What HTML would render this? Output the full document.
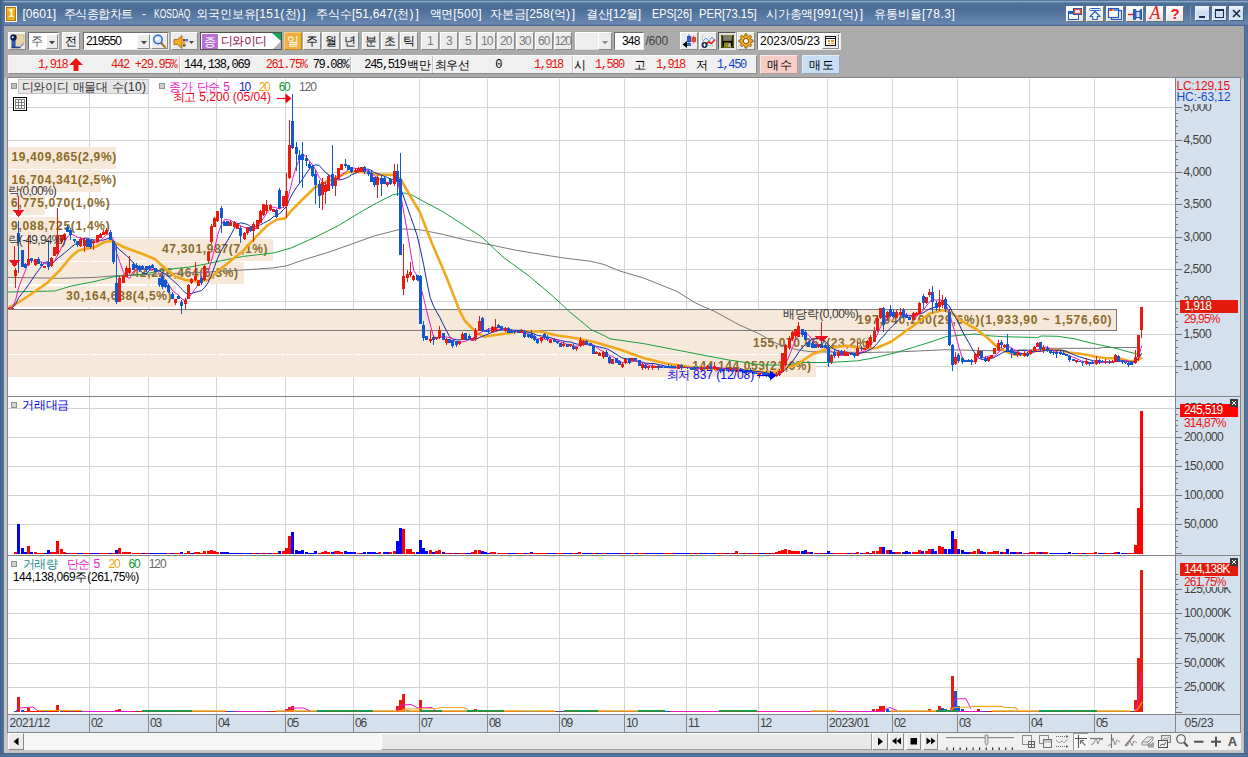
<!DOCTYPE html><html lang="ko"><head><meta charset="utf-8"><title>주식종합차트</title><style>
html,body{margin:0;padding:0}
body{width:1248px;height:757px;position:relative;overflow:hidden;background:#4D6E97;font-family:"Liberation Sans",sans-serif;font-size:12px;line-height:12px;color:#000}
div,span{position:absolute;box-sizing:border-box;white-space:nowrap}
.t{height:12px;line-height:12px;font-size:12px}
.b{font-weight:bold}
.btn{background:#ECECEC;border:1px solid;border-color:#fff #8a8a8a #8a8a8a #fff}
.inp{background:#fff;border:1px solid;border-color:#6e6e6e #e8e8e8 #e8e8e8 #6e6e6e}
.tb{background:linear-gradient(#ffffff,#e4e4e4);border:1px solid;border-color:#f8f8f8 #707070 #707070 #f8f8f8;border-radius:1px}
.wb{background:linear-gradient(#eef4fb 0%,#c9dbee 45%,#dce9f6 100%);border:1px solid;border-color:#e8f0f8 #4a6488 #4a6488 #e8f0f8}
.k{position:static;display:inline-block;text-align:center}.r{position:static;display:inline}</style></head><body>
<div class="" style="left:0px;top:0px;width:1248px;height:26px;background:linear-gradient(#3f5f87 0px,#8aa7c7 1.5px,#4f7097 3px,#4b6c94 8px,#5c7da6 18px,#6888b0 24px,#40618a 26px)"></div>
<div class="" style="left:0px;top:0px;width:4px;height:757px;background:linear-gradient(90deg,#3b5b82 0,#4a6a93 1.5px,#54749c 4px)"></div>
<div class="" style="left:1244px;top:26px;width:4px;height:731px;background:linear-gradient(90deg,#3b5b82 0,#5878a0 1.5px,#4d6e97 4px)"></div>
<div class="" style="left:0px;top:753px;width:1248px;height:4px;background:linear-gradient(#3f5f87 0,#54749c 2px,#4d6e97 4px)"></div>
<div class="" style="left:4px;top:26px;width:1240px;height:727px;background:#ABABAB"></div>
<div class="" style="left:4px;top:750px;width:1240px;height:3px;background:#C6C6C6"></div>
<div class="" style="left:1241px;top:78px;width:3px;height:675px;background:#C6C6C6"></div>
<div class="" style="left:4px;top:78px;width:4px;height:675px;background:#C6C6C6"></div>
<div class="" style="left:5px;top:6px;width:12px;height:16px;background:#fff8e0;border:1px solid #fffbe8"></div>
<div class="" style="left:6px;top:7px;width:10px;height:14px;background:linear-gradient(#f7c04a,#f0a010 60%,#f4b030);border:1px solid #b87808"></div>
<span class="t" style="left:8.5px;top:9.12px;color:#fff;font-size:10px;line-height:10px;height:10px;font-weight:bold;letter-spacing:-1.12px;">1</span>
<span class="t" style="left:22.5px;top:7.64px;color:#fff;letter-spacing:0.02px;">[0601]</span>
<span class="t" style="left:63.7px;top:7.64px;color:#fff;"><span class="k" style="width:11.47px">주</span><span class="k" style="width:11.47px">식</span><span class="k" style="width:11.47px">종</span><span class="k" style="width:11.47px">합</span><span class="k" style="width:11.47px">차</span><span class="k" style="width:11.47px">트</span></span>
<span class="t" style="left:142px;top:7.64px;color:#fff;letter-spacing:3.00px;">-</span>
<span class="t" style="left:153.7px;top:7.64px;color:#fff;transform:scaleX(0.707);transform-origin:0 0;">KOSDAQ</span>
<span class="t" style="left:195.5px;top:7.64px;color:#fff;"><span class="k" style="width:12.00px">외</span><span class="k" style="width:12.00px">국</span><span class="k" style="width:12.00px">인</span><span class="k" style="width:12.00px">보</span><span class="k" style="width:12.00px">유</span><span class="r" style="letter-spacing:0.33px">[151(</span><span class="k" style="width:12.00px">천</span><span class="r" style="letter-spacing:1.83px">)]</span></span>
<span class="t" style="left:315.7px;top:7.64px;color:#fff;"><span class="k" style="width:12.12px">주</span><span class="k" style="width:12.12px">식</span><span class="k" style="width:12.12px">수</span><span class="r" style="letter-spacing:0.17px">[51,647(</span><span class="k" style="width:12.12px">천</span><span class="r" style="letter-spacing:1.88px">)]</span></span>
<span class="t" style="left:429.5px;top:7.64px;color:#fff;"><span class="k" style="width:11.89px">액</span><span class="k" style="width:11.89px">면</span><span class="r" style="letter-spacing:0.40px">[500]</span></span>
<span class="t" style="left:490px;top:7.64px;color:#fff;"><span class="k" style="width:11.86px">자</span><span class="k" style="width:11.86px">본</span><span class="k" style="width:11.86px">금</span><span class="r" style="letter-spacing:0.26px">[258(</span><span class="k" style="width:11.86px">억</span><span class="r" style="letter-spacing:1.77px">)]</span></span>
<span class="t" style="left:586.2px;top:7.64px;color:#fff;"><span class="k" style="width:11.55px">결</span><span class="k" style="width:11.55px">산</span><span class="r" style="letter-spacing:0.05px">[12</span><span class="k" style="width:11.55px">월</span><span class="r" style="letter-spacing:1.95px">]</span></span>
<span class="t" style="left:651.5px;top:7.64px;color:#fff;transform:scaleX(0.908);transform-origin:0 0;">EPS[26]</span>
<span class="t" style="left:699px;top:7.64px;color:#fff;transform:scaleX(0.937);transform-origin:0 0;">PER[73.15]</span>
<span class="t" style="left:765.7px;top:7.64px;color:#fff;"><span class="k" style="width:11.92px">시</span><span class="k" style="width:11.92px">가</span><span class="k" style="width:11.92px">총</span><span class="k" style="width:11.92px">액</span><span class="r" style="letter-spacing:0.29px">[991(</span><span class="k" style="width:11.92px">억</span><span class="r" style="letter-spacing:1.79px">)]</span></span>
<span class="t" style="left:873.5px;top:7.64px;color:#fff;"><span class="k" style="width:12.15px">유</span><span class="k" style="width:12.15px">통</span><span class="k" style="width:12.15px">비</span><span class="k" style="width:12.15px">율</span><span class="r" style="letter-spacing:0.56px">[78.3]</span></span>
<div class="tb" style="left:1066px;top:6px;width:18px;height:16px;"></div>
<div class="tb" style="left:1086px;top:6px;width:18px;height:16px;"></div>
<div class="tb" style="left:1106px;top:6px;width:18px;height:16px;"></div>
<div class="tb" style="left:1126px;top:6px;width:18px;height:16px;"></div>
<div class="tb" style="left:1146px;top:6px;width:18px;height:16px;"></div>
<div class="tb" style="left:1166px;top:6px;width:18px;height:16px;"></div>
<div class="" style="left:1190px;top:6px;width:1px;height:15px;background:#8096b0"></div>
<div class="wb" style="left:1195px;top:6px;width:15px;height:15px;"></div>
<div class="wb" style="left:1212px;top:6px;width:15px;height:15px;"></div>
<div class="wb" style="left:1229px;top:6px;width:15px;height:15px;"></div>
<div class="btn" style="left:8px;top:32px;width:18px;height:18px;"></div>
<div class="inp" style="left:28px;top:32px;width:31px;height:18px;"></div>
<div class="btn" style="left:46px;top:34px;width:12px;height:15px;"></div>
<div class="btn" style="left:62px;top:32px;width:18px;height:18px;"></div>
<div class="inp" style="left:83px;top:32px;width:86px;height:18px;"></div>
<div class="btn" style="left:137px;top:34px;width:13px;height:15px;"></div>
<div class="btn" style="left:151px;top:33px;width:17px;height:16px;"></div>
<div class="btn" style="left:171px;top:32px;width:27px;height:18px;"></div>
<div class="" style="left:200px;top:32px;width:82px;height:18px;border:1px solid #505050;background:#fff"></div>
<div class="" style="left:202px;top:34px;width:16px;height:15px;background:#B870D4"></div>
<div class="" style="left:284px;top:32px;width:18px;height:18px;background:#F0B040;border:1px solid;border-color:#f8d080 #c08820 #c08820 #f8d080"></div>
<div class="btn" style="left:303px;top:32px;width:18px;height:18px;"></div>
<div class="btn" style="left:322px;top:32px;width:18px;height:18px;"></div>
<div class="btn" style="left:341px;top:32px;width:18px;height:18px;"></div>
<div class="btn" style="left:362px;top:32px;width:18px;height:18px;"></div>
<div class="btn" style="left:381px;top:32px;width:18px;height:18px;"></div>
<div class="btn" style="left:400px;top:32px;width:18px;height:18px;"></div>
<div class="btn" style="left:421px;top:32px;width:18px;height:18px;"></div>
<div class="btn" style="left:440px;top:32px;width:18px;height:18px;"></div>
<div class="btn" style="left:459px;top:32px;width:18px;height:18px;"></div>
<div class="btn" style="left:478px;top:32px;width:18px;height:18px;"></div>
<div class="btn" style="left:497px;top:32px;width:18px;height:18px;"></div>
<div class="btn" style="left:516px;top:32px;width:18px;height:18px;"></div>
<div class="btn" style="left:535px;top:32px;width:18px;height:18px;"></div>
<div class="btn" style="left:554px;top:32px;width:18px;height:18px;"></div>
<div class="" style="left:575px;top:32px;width:24px;height:18px;background:#EEEEEE;border:1px solid;border-color:#fff #ddd #ddd #fff"></div>
<div class="btn" style="left:598px;top:32px;width:14px;height:18px;"></div>
<div class="inp" style="left:614px;top:32px;width:30px;height:18px;"></div>
<div class="btn" style="left:680px;top:32px;width:18px;height:18px;"></div>
<div class="btn" style="left:699px;top:32px;width:18px;height:18px;"></div>
<div class="btn" style="left:718px;top:32px;width:18px;height:18px;border-color:#555 #eee #eee #555;background:#E0E0E0"></div>
<div class="btn" style="left:737px;top:32px;width:18px;height:18px;"></div>
<div class="" style="left:757px;top:32px;width:84px;height:18px;border:1px solid;border-color:#6e6e6e #f0f0f0 #f0f0f0 #6e6e6e;background:#fff"></div>
<div class="btn" style="left:822px;top:34px;width:17px;height:15px;"></div>
<div class="" style="left:8px;top:55px;width:749px;height:19px;background:#F0F0F0;border:1px solid;border-color:#fafafa #8c8c8c #8c8c8c #fafafa"></div>
<div class="" style="left:179px;top:56px;width:2px;height:17px;background:#c4c4c4;border-right:1px solid #fff"></div>
<div class="" style="left:350px;top:56px;width:2px;height:17px;background:#c4c4c4;border-right:1px solid #fff"></div>
<div class="" style="left:432px;top:56px;width:2px;height:17px;background:#c4c4c4;border-right:1px solid #fff"></div>
<div class="" style="left:572px;top:56px;width:2px;height:17px;background:#c4c4c4;border-right:1px solid #fff"></div>
<div class="" style="left:760px;top:55px;width:38px;height:19px;background:#F6CEC8;border:1px solid;border-color:#fbe4e0 #b89c98 #b89c98 #fbe4e0"></div>
<div class="" style="left:802px;top:55px;width:38px;height:19px;background:#C6DEF6;border:1px solid;border-color:#e0eefa #98a8b8 #98a8b8 #e0eefa"></div>
<span class="t" style="left:31px;top:35.14px;color:#585858;"><span class="k" style="width:11.00px">주</span></span>
<span class="t" style="left:65px;top:35.14px;color:#000;"><span class="k" style="width:12.00px">전</span></span>
<span class="t" style="left:86px;top:35.14px;color:#000;letter-spacing:-0.83px;">219550</span>
<span class="t" style="left:204px;top:35.64px;color:#fff;"><span class="k" style="width:12.00px">종</span></span>
<span class="t" style="left:220.5px;top:35.14px;color:#8A0048;"><span class="k" style="width:11.62px">디</span><span class="k" style="width:11.62px">와</span><span class="k" style="width:11.62px">이</span><span class="k" style="width:11.62px">디</span></span>
<span class="t" style="left:287px;top:35.14px;color:#fff;"><span class="k" style="width:12.00px">일</span></span>
<span class="t" style="left:306px;top:35.14px;color:#000;"><span class="k" style="width:12.00px">주</span></span>
<span class="t" style="left:325px;top:35.14px;color:#000;"><span class="k" style="width:12.00px">월</span></span>
<span class="t" style="left:344px;top:35.14px;color:#000;"><span class="k" style="width:12.00px">년</span></span>
<span class="t" style="left:365px;top:35.14px;color:#000;"><span class="k" style="width:12.00px">분</span></span>
<span class="t" style="left:384px;top:35.14px;color:#000;"><span class="k" style="width:12.00px">초</span></span>
<span class="t" style="left:403px;top:35.14px;color:#000;"><span class="k" style="width:12.00px">틱</span></span>
<span class="t" style="left:427px;top:35.14px;color:#7a7a7a;letter-spacing:-1.38px;">1</span>
<span class="t" style="left:446px;top:35.14px;color:#7a7a7a;letter-spacing:-1.38px;">3</span>
<span class="t" style="left:465px;top:35.14px;color:#7a7a7a;letter-spacing:-1.38px;">5</span>
<span class="t" style="left:481px;top:35.14px;color:#7a7a7a;letter-spacing:-0.91px;">10</span>
<span class="t" style="left:500px;top:35.14px;color:#7a7a7a;letter-spacing:-0.91px;">20</span>
<span class="t" style="left:519px;top:35.14px;color:#7a7a7a;letter-spacing:-0.91px;">30</span>
<span class="t" style="left:538px;top:35.14px;color:#7a7a7a;letter-spacing:-0.91px;">60</span>
<span class="t" style="left:554.75px;top:35.14px;color:#7a7a7a;letter-spacing:-1.41px;">120</span>
<span class="t" style="left:622px;top:35.14px;color:#000;letter-spacing:-0.81px;">348</span>
<span class="t" style="left:645.5px;top:35.14px;color:#404040;letter-spacing:-0.25px;">/600</span>
<span class="t" style="left:760px;top:35.14px;color:#000;letter-spacing:-0.01px;">2023/05/23</span>
<span class="t" style="left:38px;top:58.64px;color:#E8140C;font-family:'Liberation Mono',monospace;letter-spacing:-1.34px;">1,918</span>
<span class="t" style="left:111px;top:58.64px;color:#E8140C;font-family:'Liberation Mono',monospace;letter-spacing:-1.26px;">442 +29.95%</span>
<span class="t" style="left:184px;top:58.64px;color:#000;font-family:'Liberation Mono',monospace;letter-spacing:-1.26px;">144,138,069</span>
<span class="t" style="left:265.7px;top:58.64px;color:#E8140C;font-family:'Liberation Mono',monospace;letter-spacing:-1.36px;">261.75%</span>
<span class="t" style="left:312.7px;top:58.64px;color:#000;font-family:'Liberation Mono',monospace;letter-spacing:-1.31px;">79.08%</span>
<span class="t" style="left:364.3px;top:58.64px;color:#000;font-family:'Liberation Mono',monospace;letter-spacing:-1.34px;">245,519</span>
<span class="t" style="left:406.5px;top:58.64px;color:#000;"><span class="k" style="width:12.00px">백</span><span class="k" style="width:12.00px">만</span></span>
<span class="t" style="left:435px;top:58.64px;color:#000;"><span class="k" style="width:11.33px">최</span><span class="k" style="width:11.33px">우</span><span class="k" style="width:11.33px">선</span></span>
<span class="t" style="left:495.3px;top:58.64px;color:#000;font-family:'Liberation Mono',monospace;letter-spacing:-2.41px;">0</span>
<span class="t" style="left:534px;top:58.64px;color:#E8140C;font-family:'Liberation Mono',monospace;letter-spacing:-1.45px;">1,918</span>
<span class="t" style="left:574px;top:58.64px;color:#000;"><span class="k" style="width:10.00px">시</span></span>
<span class="t" style="left:595px;top:58.64px;color:#E8140C;font-family:'Liberation Mono',monospace;letter-spacing:-1.43px;">1,580</span>
<span class="t" style="left:634px;top:58.64px;color:#000;"><span class="k" style="width:11.00px">고</span></span>
<span class="t" style="left:656px;top:58.64px;color:#E8140C;font-family:'Liberation Mono',monospace;letter-spacing:-1.45px;">1,918</span>
<span class="t" style="left:696px;top:58.64px;color:#000;"><span class="k" style="width:11.00px">저</span></span>
<span class="t" style="left:716.7px;top:58.64px;color:#1040C8;font-family:'Liberation Mono',monospace;letter-spacing:-1.38px;">1,450</span>
<span class="t" style="left:767px;top:58.64px;color:#000;"><span class="k" style="width:12.50px">매</span><span class="k" style="width:12.50px">수</span></span>
<span class="t" style="left:809px;top:58.64px;color:#000;"><span class="k" style="width:12.50px">매</span><span class="k" style="width:12.50px">도</span></span>
<svg style="position:absolute;left:69px;top:58px" width="14" height="13" viewBox="0 0 14 13"><path d="M7 0l7 7h-4.5v6h-5v-6h-4.5z" fill="#F0140C"/></svg>
<svg width="1248" height="757" viewBox="0 0 1248 757" style="position:absolute;left:0;top:0" shape-rendering="crispEdges">
<rect x="8" y="78" width="1167" height="636" fill="#fff"/>
<rect x="1175" y="78" width="66" height="655" fill="#D5E0EE"/>
<rect x="8" y="714" width="1167" height="19" fill="#D5E0EE"/>
<path d="M89 78v636M148 78v636M216 78v636M285 78v636M353 78v636M419 78v636M487 78v636M559 78v636M624 78v636M686 78v636M758 78v636M827 78v636M892 78v636M957 78v636M1029 78v636M1094 78v636M7 107h1167M7 140h1167M7 172h1167M7 204h1167M7 237h1167M7 269h1167M7 301h1167M7 334h1167M7 366h1167M7 408h1167M7 437h1167M7 466h1167M7 495h1167M7 524h1167M7 589h1167M7 613h1167M7 638h1167M7 663h1167M7 687h1167" stroke="#D4D4D4" stroke-width="1" fill="none" transform="translate(0.5,0.5)"/>
<rect x="8" y="147" width="108" height="22" fill="#F6E9D9"/>
<rect x="8" y="170" width="93" height="22" fill="#F6E9D9"/>
<rect x="8" y="194" width="37" height="21" fill="#F6E9D9"/>
<rect x="8" y="217" width="52" height="21" fill="#F6E9D9"/>
<rect x="8" y="239" width="265" height="22" fill="#F6E9D9"/>
<rect x="8" y="262" width="236" height="22" fill="#F6E9D9"/>
<rect x="8" y="286" width="168" height="21" fill="#F6E9D9"/>
<rect x="8" y="310" width="1108" height="20" fill="#F6E9D9"/>
<rect x="8" y="331" width="864" height="23" fill="#F6E9D9"/>
<rect x="8" y="355" width="808" height="22" fill="#F6E9D9"/>
<path d="M8 309.5H1116.5V330.5H8" stroke="#7C7C7C" stroke-width="1" fill="none"/>
</svg>

<div class="" style="left:18px;top:79px;width:131px;height:15px;background:#E6E6E6;border:1px solid #c2c2c2"></div>
<div class="" style="left:11px;top:83px;width:6px;height:6px;background:#bdbdbd;border:1px solid #909090"></div>
<div class="" style="left:159px;top:83px;width:6px;height:6px;background:#d0d0d0;border:1px solid #909090"></div>
<div class="" style="left:11px;top:402px;width:6px;height:6px;background:#d0d0d0;border:1px solid #909090"></div>
<div class="" style="left:11px;top:561px;width:6px;height:6px;background:#d0d0d0;border:1px solid #909090"></div>
<span class="t" style="left:21.5px;top:80.64px;color:#303030;"><span class="k" style="width:11.81px">디</span><span class="k" style="width:11.81px">와</span><span class="k" style="width:11.81px">이</span><span class="k" style="width:11.81px">디</span><span class="r" style="letter-spacing:0.59px"> </span><span class="k" style="width:11.81px">매</span><span class="k" style="width:11.81px">물</span><span class="k" style="width:11.81px">대</span><span class="r" style="letter-spacing:0.59px"> </span><span class="k" style="width:11.81px">수</span><span class="r" style="letter-spacing:0.32px">(10)</span></span>
<span class="t" style="left:169px;top:80.64px;color:#E818C8;"><span class="k" style="width:11.81px">종</span><span class="k" style="width:11.81px">가</span><span class="r" style="letter-spacing:0.59px"> </span><span class="k" style="width:11.81px">단</span><span class="k" style="width:11.81px">순</span><span class="r" style="letter-spacing:-0.09px"> 5</span></span>
<span class="t" style="left:239px;top:80.64px;color:#1428C0;letter-spacing:-1.24px;">10</span>
<span class="t" style="left:258.7px;top:80.64px;color:#F0A000;letter-spacing:-1.24px;">20</span>
<span class="t" style="left:278.7px;top:80.64px;color:#109838;letter-spacing:-1.24px;">60</span>
<span class="t" style="left:299px;top:80.64px;color:#686868;letter-spacing:-1.01px;">120</span>
<span class="t" style="left:172.5px;top:91.14px;color:#F00018;"><span class="k" style="width:11.70px">최</span><span class="k" style="width:11.70px">고</span><span class="r" style="letter-spacing:0.03px"> 5,200 (05/04)</span></span>
<span class="t" style="left:11.5px;top:151.14px;color:#8C6A28;font-weight:bold;letter-spacing:0.62px;">19,409,865(2,9%)</span>
<span class="t" style="left:11.5px;top:174.44px;color:#8C6A28;font-weight:bold;letter-spacing:0.62px;">16,704,341(2,5%)</span>
<span class="t" style="left:11px;top:197.44px;color:#8C6A28;font-weight:bold;letter-spacing:0.71px;">6,775,070(1,0%)</span>
<span class="t" style="left:11px;top:220.44px;color:#8C6A28;font-weight:bold;letter-spacing:0.71px;">9,088,725(1,4%)</span>
<span class="t" style="left:162px;top:243.44px;color:#8C6A28;font-weight:bold;letter-spacing:0.68px;">47,301,987(7,1%)</span>
<span class="t" style="left:132.5px;top:266.84px;color:#8C6A28;font-weight:bold;letter-spacing:0.68px;">42,226,464(6,3%)</span>
<span class="t" style="left:66px;top:290.14px;color:#8C6A28;font-weight:bold;letter-spacing:0.68px;">30,164,688(4,5%)</span>
<span class="t" style="left:857px;top:313.64px;color:#8C6A28;font-weight:bold;letter-spacing:0.81px;">197,940,260(29,6%)(1,933,90 ~ 1,576,60)</span>
<span class="t" style="left:753px;top:337.14px;color:#8C6A28;font-weight:bold;letter-spacing:0.59px;">155,070,052(23,2%)</span>
<span class="t" style="left:692.3px;top:360.14px;color:#8C6A28;font-weight:bold;letter-spacing:0.59px;">144,144,053(21,6%)</span>

<svg width="1248" height="757" viewBox="0 0 1248 757" style="position:absolute;left:0;top:0">
<polyline fill="none" stroke="#787878" stroke-width="1"  points="8.0,277.4 59.4,278.3 95.0,277.4 118.8,275.5 160.0,274.0 208.0,272.0 250.0,269.5 272.0,268.0 286.0,266.0 303.0,260.0 326.7,252.8 350.5,244.5 374.0,236.0 398.0,229.8 404.0,229.0 419.8,229.7 443.5,234.5 467.3,240.4 491.0,245.0 514.8,250.0 538.6,254.0 562.4,257.8 591.0,261.3 604.0,264.5 619.8,271.0 643.5,278.0 676.8,291.3 695.8,303.2 714.8,311.5 738.6,324.6 757.6,333.0 776.6,343.6 796.0,349.5 810.0,351.7 862.7,352.5 896.0,352.0 946.0,349.7 996.0,350.8 1029.0,350.0 1051.0,348.3 1099.0,348.3 1102.7,347.5 1137.7,347.5"/>
<polyline fill="none" stroke="#18A040" stroke-width="1"  points="8.0,292.0 54.7,291.0 71.3,286.0 95.0,281.4 114.0,276.7 142.6,274.3 166.4,269.5 190.0,267.0 208.0,263.6 219.8,261.0 243.5,256.4 274.4,252.8 291.0,248.0 314.8,237.4 338.6,225.5 362.4,211.0 376.6,203.0 393.3,194.6 404.0,193.0 412.0,195.0 421.0,200.0 443.5,212.0 481.6,236.8 503.0,257.0 529.0,276.0 553.0,296.3 569.5,311.7 591.0,329.5 604.0,335.5 610.0,338.8 643.5,343.6 676.8,350.0 705.0,355.5 729.0,360.0 762.0,365.0 786.0,365.0 804.0,362.5 829.0,362.5 857.7,360.8 876.0,357.5 896.0,352.5 912.7,347.5 929.0,342.5 946.0,336.7 962.7,335.0 976.0,334.0 989.0,335.8 1004.0,336.7 1037.7,337.5 1041.0,336.0 1057.7,336.3 1074.0,338.7 1091.0,343.0 1104.0,345.8 1116.0,348.3 1129.0,352.0 1137.7,354.0 1141.0,354.5"/>
<polyline fill="none" stroke="#F2A81C" stroke-width="2.6" stroke-linejoin="round" points="8.0,308.0 14.0,305.0 23.8,299.0 35.7,291.0 47.5,282.6 59.4,270.7 71.3,256.5 78.4,250.5 95.0,247.0 104.6,242.0 111.7,241.0 123.6,247.0 142.6,254.0 154.5,258.8 166.4,269.5 176.0,276.7 185.4,280.0 197.0,281.4 208.0,280.0 219.8,269.5 231.7,260.0 243.5,250.4 255.4,237.4 267.3,225.5 276.8,219.5 285.0,218.4 291.0,211.0 303.0,199.0 314.8,187.5 326.7,181.5 338.6,176.8 348.0,172.0 362.4,172.0 376.7,174.4 393.3,175.0 400.4,179.0 404.0,185.0 412.6,200.0 419.8,212.0 431.7,242.8 446.0,276.0 460.0,311.7 465.0,321.0 476.8,333.0 484.0,336.7 500.6,334.3 519.6,331.4 538.6,331.2 557.6,335.5 576.6,338.3 596.0,342.4 619.8,349.5 643.5,357.9 667.0,363.8 691.0,367.0 714.8,368.6 738.6,369.7 762.0,371.7 776.6,372.0 786.0,367.4 796.0,365.0 812.7,354.0 829.0,348.3 846.0,345.8 862.7,348.3 876.0,348.3 891.0,341.7 904.0,332.5 916.0,324.0 929.0,314.0 942.7,310.0 951.0,312.5 962.7,321.7 976.0,329.0 987.7,338.0 996.0,346.0 1006.0,351.7 1016.0,355.0 1026.0,354.0 1036.0,350.8 1046.0,350.0 1059.0,350.0 1069.0,352.5 1082.7,354.0 1096.0,356.7 1106.0,358.3 1119.0,358.3 1127.7,360.8 1136.0,361.0 1142.0,357.5"/>
<polyline fill="none" stroke="#1428A8" stroke-width="1"  points="9.0,308.0 12.2,308.0 15.5,304.1 18.8,297.6 22.0,293.4 25.3,289.4 28.6,284.6 31.8,279.9 35.1,275.0 38.4,270.5 41.6,266.3 44.9,262.1 48.1,261.9 51.4,263.4 54.7,261.4 57.9,258.1 61.2,255.7 64.5,253.0 67.7,250.3 71.0,247.4 74.3,244.9 77.5,242.8 80.8,239.9 84.1,238.2 87.3,238.2 90.6,239.4 93.8,240.0 97.1,240.1 100.4,240.3 103.6,240.0 106.9,238.9 110.2,238.4 113.4,240.8 116.7,246.9 120.0,250.1 123.2,252.9 126.5,255.6 129.8,258.9 133.0,262.5 136.3,266.2 139.5,270.1 142.8,273.0 146.1,273.7 149.3,270.5 152.6,269.5 155.9,269.1 159.1,270.8 162.4,272.7 165.7,274.5 168.9,276.9 172.2,279.8 175.5,282.8 178.7,285.8 182.0,289.5 185.3,292.8 188.5,294.1 191.8,293.4 195.0,292.3 198.3,291.5 201.6,290.6 204.8,287.3 208.1,282.5 211.4,275.2 214.6,266.4 217.9,257.4 221.2,250.8 224.4,245.4 227.7,240.4 231.0,234.6 234.2,228.6 237.5,224.3 240.7,222.8 244.0,223.5 247.3,224.4 250.5,226.4 253.8,227.0 257.1,226.4 260.3,224.9 263.6,223.1 266.9,221.4 270.1,219.6 273.4,216.8 276.7,215.3 279.9,213.4 283.2,209.8 286.5,206.5 289.7,199.1 293.0,192.8 296.2,187.8 299.5,183.2 302.8,178.7 306.0,173.9 309.3,169.1 312.6,165.9 315.8,164.8 319.1,165.3 322.4,169.0 325.6,172.7 328.9,174.8 332.2,177.4 335.4,179.2 338.7,179.9 341.9,179.5 345.2,178.5 348.5,177.0 351.7,174.6 355.0,173.4 358.3,171.7 361.5,170.9 364.8,169.5 368.1,169.1 371.3,170.4 374.6,172.6 377.9,173.7 381.1,175.1 384.4,176.3 387.7,177.6 390.9,179.2 394.2,179.5 397.4,180.5 400.7,188.5 404.0,197.9 407.2,206.8 410.5,216.4 413.8,225.6 417.0,235.2 420.3,249.2 423.6,264.6 426.8,281.6 430.1,297.3 433.4,305.8 436.6,311.9 439.9,317.5 443.1,324.2 446.4,330.5 449.7,336.8 452.9,339.0 456.2,339.7 459.5,339.9 462.7,339.4 466.0,339.3 469.3,339.5 472.5,340.4 475.8,339.4 479.1,337.6 482.3,336.4 485.6,335.0 488.9,333.7 492.1,332.3 495.4,331.6 498.6,330.5 501.9,329.6 505.2,328.5 508.4,328.9 511.7,330.1 515.0,330.2 518.2,330.3 521.5,330.2 524.8,331.1 528.0,332.1 531.3,333.1 534.6,334.1 537.8,335.5 541.1,335.9 544.3,336.4 547.6,337.1 550.9,337.8 554.1,339.0 557.4,339.6 560.7,340.6 563.9,341.2 567.2,341.9 570.5,342.0 573.7,343.2 577.0,344.1 580.3,344.2 583.5,344.4 586.8,344.6 590.1,344.9 593.3,345.6 596.6,346.4 599.8,347.1 603.1,347.9 606.4,348.6 609.6,350.2 612.9,352.1 616.2,354.2 619.4,356.4 622.7,358.2 626.0,358.6 629.2,359.7 632.5,360.2 635.8,361.1 639.0,362.0 642.3,362.2 645.5,363.1 648.8,363.4 652.1,363.5 655.3,363.8 658.6,364.7 661.9,365.2 665.1,366.1 668.4,366.9 671.7,367.1 674.9,367.6 678.2,367.2 681.5,367.4 684.7,367.5 688.0,367.7 691.3,367.9 694.5,368.0 697.8,368.1 701.0,367.9 704.3,367.9 707.6,367.6 710.8,368.0 714.1,367.9 717.4,367.9 720.6,368.2 723.9,368.3 727.2,368.5 730.4,368.4 733.7,368.9 737.0,368.9 740.2,369.4 743.5,369.8 746.7,370.5 750.0,370.9 753.3,371.2 756.5,371.5 759.8,371.7 763.1,372.4 766.3,373.0 769.6,373.7 772.9,374.0 776.1,374.1 779.4,373.8 782.7,371.9 785.9,369.0 789.2,365.4 792.5,361.3 795.7,356.8 799.0,351.7 802.2,347.6 805.5,344.2 808.8,341.5 812.0,339.2 815.3,338.8 818.6,338.7 821.8,339.7 825.1,341.4 828.4,344.6 831.6,347.5 834.9,349.6 838.2,350.8 841.4,351.6 844.7,352.0 847.9,352.4 851.2,353.6 854.5,354.3 857.7,354.3 861.0,353.1 864.3,352.3 867.5,350.8 870.8,349.3 874.1,346.9 877.3,343.4 880.6,338.9 883.9,335.9 887.1,331.5 890.4,328.3 893.6,325.0 896.9,321.4 900.2,318.5 903.4,316.5 906.7,315.3 910.0,315.5 913.2,316.1 916.5,314.9 919.8,314.1 923.0,312.8 926.3,310.8 929.6,308.8 932.8,307.8 936.1,306.9 939.4,305.2 942.6,303.2 945.9,302.8 949.1,306.0 952.4,312.2 955.7,317.5 958.9,323.9 962.2,330.9 965.5,337.0 968.7,342.5 972.0,348.6 975.3,354.0 978.5,358.1 981.8,359.5 985.1,359.1 988.3,359.1 991.6,358.5 994.8,357.1 998.1,355.2 1001.4,353.4 1004.6,351.7 1007.9,351.4 1011.2,351.6 1014.4,351.3 1017.7,350.4 1021.0,350.3 1024.2,350.1 1027.5,350.9 1030.8,351.6 1034.0,351.7 1037.3,351.5 1040.6,351.3 1043.8,350.7 1047.1,350.3 1050.3,350.4 1053.6,350.2 1056.9,350.3 1060.1,350.1 1063.4,350.6 1066.7,351.5 1069.9,353.2 1073.2,354.4 1076.5,355.8 1079.7,356.9 1083.0,357.9 1086.3,358.7 1089.5,359.7 1092.8,360.7 1096.0,361.2 1099.3,361.9 1102.6,362.1 1105.8,362.1 1109.1,362.4 1112.4,362.2 1115.6,361.4 1118.9,361.4 1122.2,361.2 1125.4,361.1 1128.7,361.6 1132.0,361.9 1135.2,361.3 1138.5,358.7 1141.8,353.1"/>
<polyline fill="none" stroke="#E818C8" stroke-width="1"  points="9.0,308.0 12.2,308.0 15.5,300.3 18.8,287.1 22.0,278.9 25.3,270.9 28.6,261.1 31.8,259.4 35.1,262.8 38.4,262.2 41.6,261.8 44.9,263.2 48.1,264.3 51.4,264.0 54.7,260.7 57.9,254.5 61.2,248.3 64.5,241.7 67.7,236.5 71.0,234.1 74.3,235.3 77.5,237.2 80.8,238.1 84.1,239.8 87.3,242.2 90.6,243.4 93.8,242.7 97.1,242.0 100.4,240.8 103.6,237.7 106.9,234.3 110.2,234.1 113.4,239.6 116.7,253.1 120.0,262.4 123.2,271.5 126.5,277.1 129.8,278.3 133.0,271.9 136.3,270.0 139.5,268.8 142.8,269.0 146.1,269.2 149.3,269.1 152.6,269.0 155.9,269.5 159.1,272.7 162.4,276.3 165.7,280.0 168.9,284.8 172.2,290.2 175.5,293.0 178.7,295.3 182.0,299.1 185.3,300.7 188.5,297.9 191.8,293.9 195.0,289.2 198.3,284.0 201.6,280.4 204.8,276.6 208.1,271.1 211.4,261.1 214.6,248.7 217.9,234.4 221.2,224.9 224.4,219.7 227.7,219.7 231.0,220.5 234.2,222.7 237.5,223.8 240.7,225.9 244.0,227.3 247.3,228.3 250.5,230.1 253.8,230.1 257.1,226.8 260.3,222.5 263.6,218.0 266.9,212.8 270.1,209.0 273.4,206.9 276.7,208.1 279.9,208.8 283.2,206.9 286.5,204.1 289.7,191.2 293.0,177.4 296.2,166.7 299.5,159.5 302.8,153.3 306.0,156.7 309.3,160.7 312.6,165.1 315.8,170.1 319.1,177.2 322.4,181.3 325.6,184.6 328.9,184.6 332.2,184.8 335.4,181.2 338.7,178.6 341.9,174.3 345.2,172.4 348.5,169.1 351.7,167.9 355.0,168.2 358.3,169.1 361.5,169.4 364.8,169.9 368.1,170.3 371.3,172.7 374.6,176.0 377.9,177.9 381.1,180.3 384.4,182.3 387.7,182.5 390.9,182.3 394.2,181.1 397.4,180.6 400.7,194.7 404.0,213.4 407.2,231.3 410.5,251.7 413.8,270.6 417.0,275.6 420.3,285.1 423.6,297.9 426.8,311.4 430.1,324.0 433.4,336.1 436.6,338.7 439.9,337.0 443.1,337.0 446.4,337.0 449.7,337.6 452.9,339.3 456.2,342.4 459.5,342.7 462.7,341.7 466.0,341.0 469.3,339.7 472.5,338.4 475.8,336.0 479.1,333.4 482.3,331.7 485.6,330.3 488.9,329.0 492.1,328.5 495.4,329.7 498.6,329.3 501.9,328.8 505.2,328.1 508.4,329.3 511.7,330.4 515.0,331.1 518.2,331.8 521.5,332.3 524.8,333.0 528.0,333.8 531.3,335.0 534.6,336.4 537.8,338.8 541.1,338.8 544.3,339.1 547.6,339.3 550.9,339.3 554.1,339.1 557.4,340.3 560.7,342.1 563.9,343.1 567.2,344.5 570.5,344.8 573.7,346.2 577.0,346.2 580.3,345.4 583.5,344.3 586.8,344.3 590.1,343.5 593.3,345.0 596.6,347.4 599.8,349.8 603.1,351.5 606.4,353.8 609.6,355.4 612.9,356.8 616.2,358.7 619.4,361.3 622.7,362.6 626.0,361.8 629.2,362.6 632.5,361.7 635.8,360.9 639.0,361.4 642.3,362.5 645.5,363.6 648.8,365.1 652.1,366.1 655.3,366.2 658.6,366.9 661.9,366.8 665.1,367.2 668.4,367.7 671.7,368.1 674.9,368.2 678.2,367.7 681.5,367.6 684.7,367.4 688.0,367.3 691.3,367.6 694.5,368.4 697.8,368.5 701.0,368.4 704.3,368.5 707.6,367.7 710.8,367.7 714.1,367.3 717.4,367.5 720.6,367.9 723.9,368.9 727.2,369.3 730.4,369.5 733.7,370.2 737.0,369.9 740.2,369.9 743.5,370.3 746.7,371.4 750.0,371.7 753.3,372.6 756.5,373.2 759.8,373.1 763.1,373.4 766.3,374.2 769.6,374.9 772.9,374.9 776.1,375.0 779.4,374.3 782.7,369.5 785.9,363.2 789.2,356.0 792.5,347.6 795.7,339.3 799.0,333.9 802.2,332.0 805.5,332.4 808.8,335.4 812.0,339.2 815.3,343.7 818.6,345.4 821.8,347.0 825.1,347.3 828.4,350.0 831.6,351.4 834.9,353.8 838.2,354.5 841.4,355.8 844.7,354.0 847.9,353.5 851.2,353.3 854.5,354.2 857.7,352.8 861.0,352.2 864.3,351.2 867.5,348.3 870.8,344.5 874.1,341.0 877.3,334.7 880.6,326.7 883.9,323.5 887.1,318.6 890.4,315.6 893.6,315.4 896.9,316.2 900.2,313.6 903.4,314.5 906.7,315.0 910.0,315.7 913.2,316.0 916.5,316.3 919.8,313.6 923.0,310.6 926.3,306.0 929.6,301.7 932.8,299.3 936.1,300.2 939.4,299.9 942.6,300.5 945.9,304.0 949.1,312.6 952.4,324.1 955.7,335.1 958.9,347.3 962.2,357.8 965.5,361.3 968.7,360.8 972.0,362.0 975.3,360.6 978.5,358.5 981.8,357.6 985.1,357.3 988.3,356.1 991.6,356.3 994.8,355.8 998.1,352.8 1001.4,349.6 1004.6,347.3 1007.9,346.5 1011.2,347.4 1014.4,349.8 1017.7,351.3 1021.0,353.3 1024.2,353.8 1027.5,354.3 1030.8,353.3 1034.0,352.2 1037.3,349.8 1040.6,348.9 1043.8,347.1 1047.1,347.2 1050.3,348.6 1053.6,350.6 1056.9,351.6 1060.1,353.1 1063.4,353.9 1066.7,354.4 1069.9,355.8 1073.2,357.2 1076.5,358.5 1079.7,360.0 1083.0,361.5 1086.3,361.7 1089.5,362.3 1092.8,363.0 1096.0,362.5 1099.3,362.3 1102.6,362.6 1105.8,362.0 1109.1,361.8 1112.4,362.0 1115.6,360.5 1118.9,360.1 1122.2,360.5 1125.4,360.5 1128.7,361.3 1132.0,363.3 1135.2,362.5 1138.5,357.0 1141.8,345.7"/>
<g shape-rendering="crispEdges"><path fill="#1158D0" d="M17 233h3v9h-3zM18 221h1v52h-1zM21 250h3v17h-3zM22 250h1v17h-1zM24 264h3v4h-3zM25 263h1v5h-1zM30 258h3v3h-3zM31 258h1v5h-1zM37 259h3v5h-3zM38 257h1v7h-1zM40 264h3v2h-3zM41 262h1v4h-1zM47 262h3v5h-3zM48 240h1v30h-1zM66 227h3v5h-3zM67 225h1v7h-1zM69 230h3v5h-3zM70 228h1v12h-1zM73 239h3v2h-3zM74 239h1v4h-1zM76 241h3v4h-3zM77 241h1v6h-1zM86 239h3v8h-3zM87 239h1v8h-1zM89 240h3v7h-3zM90 240h1v9h-1zM109 232h3v8h-3zM110 230h1v10h-1zM112 241h3v21h-3zM113 241h1v23h-1zM115 283h3v19h-3zM116 245h1v59h-1zM132 264h3v6h-3zM133 262h1v8h-1zM135 265h3v3h-3zM136 263h1v5h-1zM138 266h3v4h-3zM139 265h1v7h-1zM141 266h3v3h-3zM142 265h1v5h-1zM145 266h3v4h-3zM146 266h1v6h-1zM148 266h3v3h-3zM149 265h1v5h-1zM151 265h3v3h-3zM152 264h1v4h-1zM154 268h3v4h-3zM155 268h1v4h-1zM158 278h3v7h-3zM159 278h1v9h-1zM161 276h3v11h-3zM162 274h1v15h-1zM164 280h3v7h-3zM165 279h1v9h-1zM167 285h3v7h-3zM168 284h1v9h-1zM171 294h3v5h-3zM172 292h1v7h-1zM177 296h3v3h-3zM178 295h1v4h-1zM180 302h3v4h-3zM181 300h1v14h-1zM200 278h3v5h-3zM201 276h1v9h-1zM220 208h3v10h-3zM221 206h1v27h-1zM223 222h3v4h-3zM224 221h1v5h-1zM226 221h3v5h-3zM227 221h1v5h-1zM239 228h3v8h-3zM240 226h1v17h-1zM249 227h3v4h-3zM250 227h1v5h-1zM275 210h3v7h-3zM276 209h1v9h-1zM278 190h3v18h-3zM279 188h1v21h-1zM291 121h3v27h-3zM292 94h1v55h-1zM295 147h3v7h-3zM296 142h1v29h-1zM298 155h3v5h-3zM299 150h1v34h-1zM301 154h3v6h-3zM302 142h1v46h-1zM305 158h3v3h-3zM306 155h1v11h-1zM308 164h3v4h-3zM309 162h1v7h-1zM311 166h3v10h-3zM312 165h1v12h-1zM314 174h3v11h-3zM315 170h1v34h-1zM318 184h3v12h-3zM319 180h1v28h-1zM331 174h3v12h-3zM332 145h1v44h-1zM344 164h3v2h-3zM345 159h1v9h-1zM347 165h3v5h-3zM348 165h1v5h-1zM350 167h3v5h-3zM351 167h1v6h-1zM363 167h3v5h-3zM364 166h1v8h-1zM367 171h3v3h-3zM368 170h1v6h-1zM370 173h3v9h-3zM371 171h1v11h-1zM373 177h3v8h-3zM374 177h1v10h-1zM380 178h3v6h-3zM381 176h1v20h-1zM383 178h3v6h-3zM384 176h1v8h-1zM389 179h3v5h-3zM390 178h1v7h-1zM396 171h3v11h-3zM397 164h1v32h-1zM399 179h3v76h-3zM400 153h1v102h-1zM416 275h3v5h-3zM417 275h1v6h-1zM419 276h3v48h-3zM420 275h1v49h-1zM422 325h3v13h-3zM423 321h1v20h-1zM425 336h3v4h-3zM426 336h1v4h-1zM432 337h3v3h-3zM433 335h1v10h-1zM442 333h3v7h-3zM443 333h1v7h-1zM448 339h3v4h-3zM449 339h1v4h-1zM451 340h3v6h-3zM452 340h1v8h-1zM455 341h3v4h-3zM456 341h1v6h-1zM464 333h3v6h-3zM465 333h1v6h-1zM468 336h3v3h-3zM469 334h1v6h-1zM481 318h3v13h-3zM482 317h1v15h-1zM484 330h3v2h-3zM485 330h1v2h-1zM487 330h3v2h-3zM488 328h1v5h-1zM497 325h3v3h-3zM498 324h1v4h-1zM500 326h3v4h-3zM501 326h1v4h-1zM507 328h3v5h-3zM508 327h1v6h-1zM510 331h3v2h-3zM511 329h1v4h-1zM513 330h3v2h-3zM514 330h1v4h-1zM517 331h3v2h-3zM518 330h1v3h-1zM523 332h3v5h-3zM524 330h1v8h-1zM527 334h3v3h-3zM528 334h1v4h-1zM530 334h3v4h-3zM531 330h1v9h-1zM533 336h3v4h-3zM534 334h1v7h-1zM536 339h3v4h-3zM537 339h1v5h-1zM543 334h3v4h-3zM544 333h1v6h-1zM546 337h3v2h-3zM547 335h1v6h-1zM553 340h3v2h-3zM554 338h1v4h-1zM556 341h3v2h-3zM557 341h1v3h-1zM559 343h3v4h-3zM560 343h1v4h-1zM566 344h3v3h-3zM567 344h1v3h-1zM572 346h3v3h-3zM573 344h1v6h-1zM585 341h3v3h-3zM586 340h1v5h-1zM589 343h3v3h-3zM590 343h1v3h-1zM592 345h3v9h-3zM593 345h1v9h-1zM605 352h3v5h-3zM606 350h1v7h-1zM608 357h3v6h-3zM609 356h1v8h-1zM615 358h3v5h-3zM616 358h1v5h-1zM618 361h3v4h-3zM619 360h1v5h-1zM628 358h3v5h-3zM629 358h1v6h-1zM634 358h3v3h-3zM635 358h1v3h-1zM638 360h3v6h-3zM639 360h1v6h-1zM644 365h3v3h-3zM645 363h1v6h-1zM657 366h3v2h-3zM658 364h1v6h-1zM660 366h3v2h-3zM661 366h1v2h-1zM664 366h3v2h-3zM665 366h1v2h-1zM667 366h3v2h-3zM668 364h1v4h-1zM670 366h3v2h-3zM671 365h1v3h-1zM673 366h3v2h-3zM674 366h1v2h-1zM680 365h3v3h-3zM681 364h1v6h-1zM686 367h3v1h-3zM687 367h1v2h-1zM690 368h3v2h-3zM691 367h1v3h-1zM693 367h3v2h-3zM694 366h1v4h-1zM696 367h3v1h-3zM697 366h1v3h-1zM703 368h3v1h-3zM704 368h1v1h-1zM709 366h3v3h-3zM710 364h1v7h-1zM719 369h3v2h-3zM720 368h1v5h-1zM722 369h3v2h-3zM723 369h1v2h-1zM726 369h3v2h-3zM727 368h1v3h-1zM732 370h3v1h-3zM733 369h1v3h-1zM739 369h3v2h-3zM740 368h1v4h-1zM742 370h3v3h-3zM743 369h1v4h-1zM745 371h3v2h-3zM746 370h1v4h-1zM749 370h3v2h-3zM750 368h1v5h-1zM752 372h3v2h-3zM753 372h1v2h-1zM755 373h3v1h-3zM756 371h1v3h-1zM762 373h3v2h-3zM763 372h1v3h-1zM765 373h3v3h-3zM766 371h1v6h-1zM768 374h3v3h-3zM769 373h1v5h-1zM801 329h3v6h-3zM802 329h1v8h-1zM804 332h3v8h-3zM805 330h1v10h-1zM807 342h3v5h-3zM808 341h1v6h-1zM811 343h3v5h-3zM812 341h1v7h-1zM814 344h3v4h-3zM815 344h1v4h-1zM820 344h3v4h-3zM821 342h1v6h-1zM824 345h3v3h-3zM825 343h1v5h-1zM827 347h3v15h-3zM828 345h1v22h-1zM833 352h3v4h-3zM834 350h1v8h-1zM840 351h3v4h-3zM841 350h1v5h-1zM850 353h3v2h-3zM851 352h1v3h-1zM853 353h3v3h-3zM854 353h1v5h-1zM860 348h3v1h-3zM861 346h1v5h-1zM882 308h3v17h-3zM883 307h1v25h-1zM889 309h3v7h-3zM890 305h1v12h-1zM892 312h3v5h-3zM893 310h1v8h-1zM902 310h3v7h-3zM903 308h1v10h-1zM905 315h3v3h-3zM906 313h1v5h-1zM908 317h3v3h-3zM909 316h1v4h-1zM922 296h3v7h-3zM923 294h1v15h-1zM931 292h3v10h-3zM932 286h1v27h-1zM935 303h3v5h-3zM936 301h1v10h-1zM944 299h3v10h-3zM945 297h1v15h-1zM948 312h3v33h-3zM949 309h1v37h-1zM951 345h3v20h-3zM952 344h1v27h-1zM957 355h3v6h-3zM958 353h1v10h-1zM961 358h3v4h-3zM962 357h1v7h-1zM964 360h3v2h-3zM965 360h1v2h-1zM967 360h3v2h-3zM968 359h1v3h-1zM970 360h3v2h-3zM971 359h1v6h-1zM980 351h3v7h-3zM981 351h1v8h-1zM984 358h3v3h-3zM985 356h1v6h-1zM1000 342h3v3h-3zM1001 340h1v8h-1zM1006 344h3v7h-3zM1007 334h1v18h-1zM1010 349h3v4h-3zM1011 348h1v10h-1zM1013 352h3v3h-3zM1014 352h1v3h-1zM1019 353h3v2h-3zM1020 353h1v3h-1zM1026 353h3v3h-3zM1027 352h1v5h-1zM1039 342h3v7h-3zM1040 342h1v9h-1zM1046 348h3v3h-3zM1047 346h1v6h-1zM1049 351h3v2h-3zM1050 351h1v3h-1zM1052 352h3v1h-3zM1053 351h1v4h-1zM1055 352h3v2h-3zM1056 351h1v7h-1zM1059 352h3v2h-3zM1060 350h1v5h-1zM1062 353h3v2h-3zM1063 351h1v4h-1zM1065 354h3v2h-3zM1066 354h1v2h-1zM1068 356h3v4h-3zM1069 355h1v7h-1zM1072 359h3v2h-3zM1073 359h1v2h-1zM1078 361h3v1h-3zM1079 361h1v1h-1zM1081 362h3v1h-3zM1082 361h1v5h-1zM1088 362h3v2h-3zM1089 362h1v4h-1zM1091 362h3v2h-3zM1092 361h1v3h-1zM1098 360h3v2h-3zM1099 359h1v5h-1zM1101 361h3v1h-3zM1102 360h1v2h-1zM1108 362h3v1h-3zM1109 360h1v4h-1zM1117 356h3v5h-3zM1118 355h1v6h-1zM1121 360h3v2h-3zM1122 360h1v4h-1zM1124 362h3v1h-3zM1125 362h1v2h-1zM1127 363h3v2h-3zM1128 362h1v5h-1zM1130 362h3v3h-3zM1131 362h1v3h-1z"/><path fill="#EA1A0E" d="M7 308h3v1h-3zM8 308h1v1h-1zM11 308h3v1h-3zM12 308h1v1h-1zM14 270h3v6h-3zM15 268h1v20h-1zM27 259h3v6h-3zM28 235h1v31h-1zM34 259h3v6h-3zM35 259h1v7h-1zM43 266h3v2h-3zM44 266h1v2h-1zM50 258h3v8h-3zM51 257h1v10h-1zM53 247h3v9h-3zM54 247h1v9h-1zM56 235h3v19h-3zM57 208h1v47h-1zM60 235h3v7h-3zM61 235h1v9h-1zM63 234h3v6h-3zM64 233h1v7h-1zM79 239h3v7h-3zM80 237h1v10h-1zM83 240h3v6h-3zM84 238h1v14h-1zM92 241h3v2h-3zM93 240h1v10h-1zM96 235h3v7h-3zM97 235h1v8h-1zM99 234h3v4h-3zM100 233h1v5h-1zM102 232h3v3h-3zM103 230h1v5h-1zM105 230h3v4h-3zM106 228h1v7h-1zM118 278h3v24h-3zM119 276h1v26h-1zM122 276h3v7h-3zM123 274h1v9h-1zM125 268h3v9h-3zM126 266h1v11h-1zM128 268h3v5h-3zM129 256h1v18h-1zM174 299h3v4h-3zM175 299h1v6h-1zM184 300h3v4h-3zM185 298h1v11h-1zM187 285h3v14h-3zM188 284h1v15h-1zM190 279h3v4h-3zM191 278h1v6h-1zM194 276h3v4h-3zM195 262h1v19h-1zM197 280h3v6h-3zM198 280h1v6h-1zM203 266h3v14h-3zM204 265h1v16h-1zM207 252h3v9h-3zM208 251h1v12h-1zM210 226h3v16h-3zM211 224h1v20h-1zM213 218h3v9h-3zM214 217h1v10h-1zM216 211h3v10h-3zM217 211h1v11h-1zM229 222h3v4h-3zM230 220h1v6h-1zM233 222h3v5h-3zM234 221h1v7h-1zM236 224h3v5h-3zM237 223h1v6h-1zM243 233h3v6h-3zM244 232h1v8h-1zM246 227h3v6h-3zM247 227h1v8h-1zM252 224h3v7h-3zM253 222h1v20h-1zM256 220h3v9h-3zM257 220h1v9h-1zM259 211h3v12h-3zM260 210h1v13h-1zM262 204h3v11h-3zM263 204h1v12h-1zM265 205h3v6h-3zM266 200h1v13h-1zM269 205h3v5h-3zM270 204h1v7h-1zM272 209h3v3h-3zM273 209h1v3h-1zM282 196h3v10h-3zM283 196h1v12h-1zM285 191h3v15h-3zM286 173h1v45h-1zM288 145h3v33h-3zM289 120h1v59h-1zM321 182h3v13h-3zM322 178h1v32h-1zM324 185h3v7h-3zM325 182h1v22h-1zM327 176h3v15h-3zM328 175h1v16h-1zM334 178h3v8h-3zM335 175h1v21h-1zM337 168h3v11h-3zM338 168h1v11h-1zM340 164h3v6h-3zM341 164h1v6h-1zM354 170h3v2h-3zM355 168h1v4h-1zM357 168h3v4h-3zM358 167h1v6h-1zM360 167h3v5h-3zM361 167h1v5h-1zM376 177h3v8h-3zM377 175h1v23h-1zM386 183h3v2h-3zM387 182h1v5h-1zM393 171h3v13h-3zM394 164h1v22h-1zM402 276h3v13h-3zM403 244h1v51h-1zM406 274h3v4h-3zM407 270h1v12h-1zM409 272h3v3h-3zM410 262h1v15h-1zM412 276h3v4h-3zM413 275h1v6h-1zM429 339h3v2h-3zM430 330h1v13h-1zM435 337h3v2h-3zM436 337h1v3h-1zM438 330h3v8h-3zM439 326h1v13h-1zM445 339h3v4h-3zM446 338h1v7h-1zM458 341h3v3h-3zM459 341h1v4h-1zM461 334h3v6h-3zM462 332h1v8h-1zM471 338h3v2h-3zM472 338h1v3h-1zM474 330h3v9h-3zM475 328h1v13h-1zM478 321h3v10h-3zM479 316h1v15h-1zM491 327h3v5h-3zM492 326h1v7h-1zM494 327h3v4h-3zM495 319h1v12h-1zM504 328h3v3h-3zM505 327h1v5h-1zM520 331h3v2h-3zM521 329h1v4h-1zM540 337h3v4h-3zM541 337h1v6h-1zM549 340h3v3h-3zM550 339h1v4h-1zM562 344h3v2h-3zM563 342h1v5h-1zM569 344h3v2h-3zM570 344h1v3h-1zM575 347h3v2h-3zM576 347h1v4h-1zM579 340h3v6h-3zM580 337h1v10h-1zM582 341h3v4h-3zM583 340h1v6h-1zM595 352h3v2h-3zM596 351h1v3h-1zM598 353h3v3h-3zM599 352h1v4h-1zM602 352h3v5h-3zM603 351h1v8h-1zM611 359h3v5h-3zM612 359h1v5h-1zM621 364h3v3h-3zM622 362h1v6h-1zM624 359h3v4h-3zM625 359h1v5h-1zM631 358h3v3h-3zM632 358h1v3h-1zM641 364h3v4h-3zM642 363h1v7h-1zM647 366h3v2h-3zM648 366h1v4h-1zM651 366h3v2h-3zM652 364h1v6h-1zM654 366h3v2h-3zM655 366h1v2h-1zM677 365h3v4h-3zM678 364h1v5h-1zM683 367h3v1h-3zM684 366h1v2h-1zM700 367h3v3h-3zM701 366h1v5h-1zM706 366h3v3h-3zM707 365h1v6h-1zM713 366h3v3h-3zM714 362h1v8h-1zM716 368h3v2h-3zM717 367h1v4h-1zM729 368h3v2h-3zM730 367h1v4h-1zM735 369h3v3h-3zM736 368h1v4h-1zM758 373h3v3h-3zM759 373h1v5h-1zM771 374h3v3h-3zM772 372h1v6h-1zM775 374h3v2h-3zM776 372h1v5h-1zM778 371h3v4h-3zM779 369h1v7h-1zM781 353h3v19h-3zM782 353h1v19h-1zM784 345h3v20h-3zM785 344h1v22h-1zM788 338h3v10h-3zM789 336h1v14h-1zM791 332h3v7h-3zM792 331h1v10h-1zM794 329h3v7h-3zM795 329h1v9h-1zM797 326h3v11h-3zM798 322h1v15h-1zM817 344h3v3h-3zM818 344h1v4h-1zM830 355h3v7h-3zM831 354h1v10h-1zM837 352h3v4h-3zM838 350h1v8h-1zM843 352h3v4h-3zM844 350h1v6h-1zM846 352h3v4h-3zM847 352h1v4h-1zM856 348h3v8h-3zM857 342h1v14h-1zM863 348h3v2h-3zM864 348h1v2h-1zM866 341h3v7h-3zM867 340h1v9h-1zM869 337h3v8h-3zM870 335h1v12h-1zM873 331h3v11h-3zM874 327h1v15h-1zM876 318h3v12h-3zM877 316h1v16h-1zM879 308h3v10h-3zM880 308h1v11h-1zM886 312h3v6h-3zM887 311h1v9h-1zM895 312h3v6h-3zM896 310h1v8h-1zM899 312h3v3h-3zM900 308h1v8h-1zM912 313h3v7h-3zM913 312h1v8h-1zM915 313h3v2h-3zM916 312h1v4h-1zM918 303h3v11h-3zM919 302h1v12h-1zM925 297h3v6h-3zM926 297h1v7h-1zM928 292h3v3h-3zM929 289h1v8h-1zM938 302h3v5h-3zM939 290h1v21h-1zM941 300h3v5h-3zM942 295h1v13h-1zM954 357h3v7h-3zM955 352h1v13h-1zM974 354h3v8h-3zM975 353h1v11h-1zM977 351h3v5h-3zM978 347h1v10h-1zM987 357h3v4h-3zM988 357h1v5h-1zM990 355h3v3h-3zM991 355h1v4h-1zM993 348h3v6h-3zM994 348h1v6h-1zM997 343h3v7h-3zM998 340h1v11h-1zM1003 345h3v2h-3zM1004 344h1v4h-1zM1016 352h3v3h-3zM1017 351h1v6h-1zM1023 353h3v3h-3zM1024 351h1v6h-1zM1029 350h3v4h-3zM1030 350h1v5h-1zM1033 347h3v4h-3zM1034 346h1v5h-1zM1036 343h3v4h-3zM1037 342h1v5h-1zM1042 347h3v3h-3zM1043 345h1v8h-1zM1075 360h3v2h-3zM1076 360h1v3h-1zM1085 361h3v3h-3zM1086 358h1v7h-1zM1095 360h3v4h-3zM1096 356h1v9h-1zM1104 361h3v1h-3zM1105 359h1v5h-1zM1111 361h3v2h-3zM1112 360h1v3h-1zM1114 355h3v7h-3zM1115 354h1v8h-1zM1134 357h3v6h-3zM1135 350h1v14h-1zM1137 335h3v22h-3zM1138 335h1v26h-1zM1140 307h3v23h-3zM1141 307h1v31h-1z"/></g>
<g fill="#F01020" stroke="#F01020" shape-rendering="crispEdges"><path d="M18.5 196v14" fill="none"/><path d="M13 210h11l-5.5 6z"/><path d="M14.5 246v14" fill="none"/><path d="M9 260h11l-5.5 6z"/><path d="M821.5 322v14" fill="none"/><path d="M815 336h13l-6.5 5z"/></g>
<g fill="#F00018" stroke="#F00018"><path d="M277 98.5h9" fill="none" stroke-width="1.2"/><path d="M285.5 93.5l6 5-6 5z" stroke="none"/></g>
<g fill="#0808F0" stroke="#0808F0"><path d="M757 375.5h14" fill="none" stroke-width="1.2"/><path d="M770 370.5l6.5 5-6.5 5z" stroke="none"/></g>
</svg>
<svg width="1248" height="757" viewBox="0 0 1248 757" style="position:absolute;left:0;top:0" shape-rendering="crispEdges">
<path fill="#0000FF" d="M17 524h3v30h-3zM21 548h3v6h-3zM24 552h3v2h-3zM30 552h3v2h-3zM47 550h3v4h-3zM115 550h3v4h-3zM180 552h3v2h-3zM220 552h3v2h-3zM223 552h3v2h-3zM226 552h3v2h-3zM278 551h3v3h-3zM291 532h3v22h-3zM295 550h3v4h-3zM298 551h3v3h-3zM301 550h3v4h-3zM305 552h3v2h-3zM314 551h3v3h-3zM331 552h3v2h-3zM344 551h3v3h-3zM347 552h3v2h-3zM350 552h3v2h-3zM353 552h3v2h-3zM363 552h3v2h-3zM367 552h3v2h-3zM370 552h3v2h-3zM373 552h3v2h-3zM383 552h3v2h-3zM386 552h3v2h-3zM396 541h3v13h-3zM399 528h3v26h-3zM416 552h3v2h-3zM419 540h3v14h-3zM422 548h3v6h-3zM425 551h3v3h-3zM432 552h3v2h-3zM442 552h3v2h-3zM481 551h3v3h-3zM484 552h3v2h-3zM530 552h3v2h-3zM801 551h3v3h-3zM804 550h3v4h-3zM810 552h3v2h-3zM827 551h3v3h-3zM882 547h3v7h-3zM889 550h3v4h-3zM892 552h3v2h-3zM902 552h3v2h-3zM905 551h3v3h-3zM908 552h3v2h-3zM921 551h3v3h-3zM931 549h3v5h-3zM934 551h3v3h-3zM944 549h3v5h-3zM948 549h3v5h-3zM951 531h3v23h-3zM957 549h3v5h-3zM961 550h3v4h-3zM964 552h3v2h-3zM967 552h3v2h-3zM980 551h3v3h-3zM983 552h3v2h-3zM1000 552h3v2h-3zM1006 549h3v5h-3zM1010 552h3v2h-3zM1013 552h3v2h-3zM1019 552h3v2h-3zM1039 552h3v2h-3zM1068 552h3v2h-3zM1117 552h3v2h-3zM43 553h4v1h-4zM66 553h4v1h-4zM76 553h4v1h-4zM79 553h4v1h-4zM89 553h4v1h-4zM92 553h4v1h-4zM96 553h4v1h-4zM109 553h4v1h-4zM141 553h4v1h-4zM148 553h4v1h-4zM151 553h4v1h-4zM154 553h4v1h-4zM158 553h4v1h-4zM161 553h4v1h-4zM164 553h4v1h-4zM171 553h4v1h-4zM190 553h4v1h-4zM229 553h4v1h-4zM233 553h4v1h-4zM236 553h4v1h-4zM239 553h4v1h-4zM243 553h4v1h-4zM246 553h4v1h-4zM249 553h4v1h-4zM256 553h4v1h-4zM262 553h4v1h-4zM269 553h4v1h-4zM308 553h4v1h-4zM311 553h4v1h-4zM360 553h4v1h-4zM376 553h4v1h-4zM448 553h4v1h-4zM455 553h4v1h-4zM464 553h4v1h-4zM468 553h4v1h-4zM487 553h4v1h-4zM507 553h4v1h-4zM510 553h4v1h-4zM513 553h4v1h-4zM523 553h4v1h-4zM546 553h4v1h-4zM549 553h4v1h-4zM553 553h4v1h-4zM562 553h4v1h-4zM566 553h4v1h-4zM569 553h4v1h-4zM575 553h4v1h-4zM582 553h4v1h-4zM585 553h4v1h-4zM589 553h4v1h-4zM595 553h4v1h-4zM598 553h4v1h-4zM605 553h4v1h-4zM608 553h4v1h-4zM611 553h4v1h-4zM615 553h4v1h-4zM618 553h4v1h-4zM624 553h4v1h-4zM628 553h4v1h-4zM634 553h4v1h-4zM644 553h4v1h-4zM647 553h4v1h-4zM651 553h4v1h-4zM654 553h4v1h-4zM657 553h4v1h-4zM660 553h4v1h-4zM673 553h4v1h-4zM677 553h4v1h-4zM680 553h4v1h-4zM683 553h4v1h-4zM686 553h4v1h-4zM693 553h4v1h-4zM700 553h4v1h-4zM703 553h4v1h-4zM706 553h4v1h-4zM709 553h4v1h-4zM713 553h4v1h-4zM726 553h4v1h-4zM732 553h4v1h-4zM742 553h4v1h-4zM749 553h4v1h-4zM758 553h4v1h-4zM762 553h4v1h-4zM768 553h4v1h-4zM817 553h4v1h-4zM824 553h4v1h-4zM830 553h4v1h-4zM846 553h4v1h-4zM853 553h4v1h-4zM860 553h4v1h-4zM869 553h4v1h-4zM1026 553h4v1h-4zM1049 553h4v1h-4zM1052 553h4v1h-4zM1055 553h4v1h-4zM1059 553h4v1h-4zM1062 553h4v1h-4zM1065 553h4v1h-4zM1072 553h4v1h-4zM1075 553h4v1h-4zM1081 553h4v1h-4zM1098 553h4v1h-4zM1101 553h4v1h-4zM1111 553h4v1h-4zM1121 553h4v1h-4zM1124 553h4v1h-4z"/><path fill="#FF0000" d="M14 552h3v2h-3zM27 546h3v8h-3zM34 552h3v2h-3zM50 552h3v2h-3zM53 552h3v2h-3zM56 541h3v13h-3zM60 549h3v5h-3zM63 552h3v2h-3zM118 548h3v6h-3zM122 552h3v2h-3zM125 552h3v2h-3zM128 552h3v2h-3zM187 551h3v3h-3zM194 552h3v2h-3zM197 552h3v2h-3zM203 551h3v3h-3zM207 551h3v3h-3zM210 550h3v4h-3zM213 551h3v3h-3zM216 552h3v2h-3zM282 551h3v3h-3zM285 548h3v6h-3zM288 536h3v18h-3zM321 552h3v2h-3zM324 551h3v3h-3zM327 552h3v2h-3zM334 551h3v3h-3zM337 551h3v3h-3zM340 552h3v2h-3zM378 552h3v2h-3zM389 552h3v2h-3zM393 551h3v3h-3zM402 529h3v25h-3zM406 549h3v5h-3zM409 549h3v5h-3zM412 552h3v2h-3zM429 550h3v4h-3zM435 551h3v3h-3zM438 550h3v4h-3zM471 552h3v2h-3zM474 550h3v4h-3zM478 550h3v4h-3zM490 552h3v2h-3zM493 552h3v2h-3zM578 552h3v2h-3zM735 551h3v3h-3zM775 552h3v2h-3zM778 551h3v3h-3zM781 550h3v4h-3zM784 549h3v5h-3zM788 550h3v4h-3zM791 551h3v3h-3zM794 551h3v3h-3zM797 551h3v3h-3zM807 552h3v2h-3zM856 552h3v2h-3zM866 552h3v2h-3zM872 551h3v3h-3zM876 551h3v3h-3zM879 547h3v7h-3zM886 550h3v4h-3zM895 552h3v2h-3zM898 552h3v2h-3zM912 552h3v2h-3zM915 552h3v2h-3zM918 550h3v4h-3zM925 551h3v3h-3zM928 549h3v5h-3zM938 546h3v8h-3zM941 547h3v7h-3zM954 539h3v15h-3zM970 552h3v2h-3zM973 551h3v3h-3zM977 549h3v5h-3zM987 552h3v2h-3zM990 552h3v2h-3zM993 551h3v3h-3zM996 551h3v3h-3zM1003 552h3v2h-3zM1016 552h3v2h-3zM1029 552h3v2h-3zM1032 552h3v2h-3zM1036 552h3v2h-3zM1042 552h3v2h-3zM1045 552h3v2h-3zM1094 552h3v2h-3zM1114 552h3v2h-3zM1134 545h3v9h-3zM1137 508h3v46h-3zM1140 411h3v143h-3zM37 553h4v1h-4zM40 553h4v1h-4zM69 553h4v1h-4zM73 553h4v1h-4zM83 553h4v1h-4zM86 553h4v1h-4zM99 553h4v1h-4zM102 553h4v1h-4zM105 553h4v1h-4zM112 553h4v1h-4zM132 553h4v1h-4zM135 553h4v1h-4zM138 553h4v1h-4zM145 553h4v1h-4zM167 553h4v1h-4zM174 553h4v1h-4zM177 553h4v1h-4zM184 553h4v1h-4zM200 553h4v1h-4zM252 553h4v1h-4zM259 553h4v1h-4zM265 553h4v1h-4zM272 553h4v1h-4zM275 553h4v1h-4zM318 553h4v1h-4zM357 553h4v1h-4zM445 553h4v1h-4zM451 553h4v1h-4zM458 553h4v1h-4zM461 553h4v1h-4zM497 553h4v1h-4zM500 553h4v1h-4zM504 553h4v1h-4zM517 553h4v1h-4zM520 553h4v1h-4zM527 553h4v1h-4zM533 553h4v1h-4zM536 553h4v1h-4zM540 553h4v1h-4zM543 553h4v1h-4zM556 553h4v1h-4zM559 553h4v1h-4zM572 553h4v1h-4zM592 553h4v1h-4zM602 553h4v1h-4zM621 553h4v1h-4zM631 553h4v1h-4zM638 553h4v1h-4zM641 553h4v1h-4zM664 553h4v1h-4zM667 553h4v1h-4zM670 553h4v1h-4zM690 553h4v1h-4zM696 553h4v1h-4zM716 553h4v1h-4zM719 553h4v1h-4zM722 553h4v1h-4zM729 553h4v1h-4zM739 553h4v1h-4zM745 553h4v1h-4zM752 553h4v1h-4zM755 553h4v1h-4zM765 553h4v1h-4zM771 553h4v1h-4zM814 553h4v1h-4zM820 553h4v1h-4zM833 553h4v1h-4zM837 553h4v1h-4zM840 553h4v1h-4zM843 553h4v1h-4zM850 553h4v1h-4zM863 553h4v1h-4zM1023 553h4v1h-4zM1078 553h4v1h-4zM1085 553h4v1h-4zM1088 553h4v1h-4zM1091 553h4v1h-4zM1104 553h4v1h-4zM1108 553h4v1h-4zM1127 553h4v1h-4zM1130 553h4v1h-4z"/>
<path fill="#1158D0" d="M21 710h3v2h-3zM406 710h3v2h-3zM422 710h3v2h-3zM478 710h3v2h-3zM886 709h3v3h-3zM941 708h3v4h-3zM944 709h3v3h-3zM954 691h3v21h-3zM957 706h3v6h-3zM961 709h3v3h-3zM14 711h4v1h-4zM43 711h4v1h-4zM60 711h4v1h-4zM69 711h4v1h-4zM79 711h4v1h-4zM89 711h4v1h-4zM96 711h4v1h-4zM99 711h4v1h-4zM105 711h4v1h-4zM135 711h4v1h-4zM145 711h4v1h-4zM148 711h4v1h-4zM154 711h4v1h-4zM161 711h4v1h-4zM164 711h4v1h-4zM171 711h4v1h-4zM174 711h4v1h-4zM200 711h4v1h-4zM210 711h4v1h-4zM213 711h4v1h-4zM220 711h4v1h-4zM226 711h4v1h-4zM229 711h4v1h-4zM233 711h4v1h-4zM236 711h4v1h-4zM239 711h4v1h-4zM243 711h4v1h-4zM249 711h4v1h-4zM252 711h4v1h-4zM265 711h4v1h-4zM278 711h4v1h-4zM282 711h4v1h-4zM295 711h4v1h-4zM301 711h4v1h-4zM308 711h4v1h-4zM311 711h4v1h-4zM314 711h4v1h-4zM318 711h4v1h-4zM321 711h4v1h-4zM324 711h4v1h-4zM337 711h4v1h-4zM344 711h4v1h-4zM350 711h4v1h-4zM360 711h4v1h-4zM363 711h4v1h-4zM367 711h4v1h-4zM373 711h4v1h-4zM380 711h4v1h-4zM386 711h4v1h-4zM409 711h4v1h-4zM425 711h4v1h-4zM438 711h4v1h-4zM448 711h4v1h-4zM461 711h4v1h-4zM464 711h4v1h-4zM468 711h4v1h-4zM497 711h4v1h-4zM517 711h4v1h-4zM520 711h4v1h-4zM523 711h4v1h-4zM527 711h4v1h-4zM530 711h4v1h-4zM533 711h4v1h-4zM536 711h4v1h-4zM543 711h4v1h-4zM549 711h4v1h-4zM556 711h4v1h-4zM559 711h4v1h-4zM566 711h4v1h-4zM579 711h4v1h-4zM582 711h4v1h-4zM585 711h4v1h-4zM595 711h4v1h-4zM605 711h4v1h-4zM611 711h4v1h-4zM615 711h4v1h-4zM618 711h4v1h-4zM624 711h4v1h-4zM631 711h4v1h-4zM634 711h4v1h-4zM638 711h4v1h-4zM647 711h4v1h-4zM654 711h4v1h-4zM657 711h4v1h-4zM664 711h4v1h-4zM667 711h4v1h-4zM673 711h4v1h-4zM680 711h4v1h-4zM686 711h4v1h-4zM693 711h4v1h-4zM709 711h4v1h-4zM719 711h4v1h-4zM732 711h4v1h-4zM742 711h4v1h-4zM749 711h4v1h-4zM765 711h4v1h-4zM768 711h4v1h-4zM775 711h4v1h-4zM778 711h4v1h-4zM781 711h4v1h-4zM791 711h4v1h-4zM794 711h4v1h-4zM797 711h4v1h-4zM801 711h4v1h-4zM804 711h4v1h-4zM814 711h4v1h-4zM817 711h4v1h-4zM824 711h4v1h-4zM830 711h4v1h-4zM837 711h4v1h-4zM843 711h4v1h-4zM846 711h4v1h-4zM853 711h4v1h-4zM856 711h4v1h-4zM860 711h4v1h-4zM863 711h4v1h-4zM866 711h4v1h-4zM889 711h4v1h-4zM895 711h4v1h-4zM899 711h4v1h-4zM905 711h4v1h-4zM918 711h4v1h-4zM922 711h4v1h-4zM948 711h4v1h-4zM964 711h4v1h-4zM967 711h4v1h-4zM974 711h4v1h-4zM980 711h4v1h-4zM984 711h4v1h-4zM1000 711h4v1h-4zM1003 711h4v1h-4zM1010 711h4v1h-4zM1013 711h4v1h-4zM1016 711h4v1h-4zM1029 711h4v1h-4zM1033 711h4v1h-4zM1039 711h4v1h-4zM1042 711h4v1h-4zM1046 711h4v1h-4zM1049 711h4v1h-4zM1055 711h4v1h-4zM1059 711h4v1h-4zM1068 711h4v1h-4zM1088 711h4v1h-4zM1091 711h4v1h-4zM1101 711h4v1h-4zM1117 711h4v1h-4zM1121 711h4v1h-4zM1124 711h4v1h-4zM1130 711h4v1h-4z"/><path fill="#EA1A0E" d="M17 697h3v15h-3zM27 708h3v4h-3zM47 710h3v2h-3zM56 705h3v7h-3zM115 710h3v2h-3zM118 709h3v3h-3zM285 709h3v3h-3zM288 707h3v5h-3zM291 706h3v6h-3zM396 706h3v6h-3zM399 700h3v12h-3zM402 694h3v18h-3zM419 700h3v12h-3zM474 709h3v3h-3zM872 709h3v3h-3zM876 709h3v3h-3zM879 706h3v6h-3zM882 706h3v6h-3zM928 709h3v3h-3zM938 706h3v6h-3zM951 676h3v36h-3zM977 709h3v3h-3zM1134 700h3v12h-3zM1137 658h3v54h-3zM1140 570h3v142h-3zM24 711h4v1h-4zM30 711h4v1h-4zM34 711h4v1h-4zM37 711h4v1h-4zM40 711h4v1h-4zM50 711h4v1h-4zM53 711h4v1h-4zM63 711h4v1h-4zM66 711h4v1h-4zM73 711h4v1h-4zM76 711h4v1h-4zM83 711h4v1h-4zM86 711h4v1h-4zM92 711h4v1h-4zM102 711h4v1h-4zM109 711h4v1h-4zM112 711h4v1h-4zM122 711h4v1h-4zM125 711h4v1h-4zM128 711h4v1h-4zM132 711h4v1h-4zM138 711h4v1h-4zM141 711h4v1h-4zM151 711h4v1h-4zM158 711h4v1h-4zM167 711h4v1h-4zM177 711h4v1h-4zM180 711h4v1h-4zM184 711h4v1h-4zM187 711h4v1h-4zM190 711h4v1h-4zM194 711h4v1h-4zM197 711h4v1h-4zM203 711h4v1h-4zM207 711h4v1h-4zM216 711h4v1h-4zM223 711h4v1h-4zM246 711h4v1h-4zM256 711h4v1h-4zM259 711h4v1h-4zM262 711h4v1h-4zM269 711h4v1h-4zM272 711h4v1h-4zM275 711h4v1h-4zM298 711h4v1h-4zM305 711h4v1h-4zM327 711h4v1h-4zM331 711h4v1h-4zM334 711h4v1h-4zM340 711h4v1h-4zM347 711h4v1h-4zM354 711h4v1h-4zM357 711h4v1h-4zM370 711h4v1h-4zM376 711h4v1h-4zM383 711h4v1h-4zM389 711h4v1h-4zM393 711h4v1h-4zM412 711h4v1h-4zM416 711h4v1h-4zM429 711h4v1h-4zM432 711h4v1h-4zM435 711h4v1h-4zM442 711h4v1h-4zM445 711h4v1h-4zM451 711h4v1h-4zM455 711h4v1h-4zM458 711h4v1h-4zM471 711h4v1h-4zM481 711h4v1h-4zM484 711h4v1h-4zM487 711h4v1h-4zM491 711h4v1h-4zM494 711h4v1h-4zM500 711h4v1h-4zM504 711h4v1h-4zM507 711h4v1h-4zM510 711h4v1h-4zM513 711h4v1h-4zM540 711h4v1h-4zM546 711h4v1h-4zM553 711h4v1h-4zM562 711h4v1h-4zM569 711h4v1h-4zM572 711h4v1h-4zM575 711h4v1h-4zM589 711h4v1h-4zM592 711h4v1h-4zM598 711h4v1h-4zM602 711h4v1h-4zM608 711h4v1h-4zM621 711h4v1h-4zM628 711h4v1h-4zM641 711h4v1h-4zM644 711h4v1h-4zM651 711h4v1h-4zM660 711h4v1h-4zM670 711h4v1h-4zM677 711h4v1h-4zM683 711h4v1h-4zM690 711h4v1h-4zM696 711h4v1h-4zM700 711h4v1h-4zM703 711h4v1h-4zM706 711h4v1h-4zM713 711h4v1h-4zM716 711h4v1h-4zM722 711h4v1h-4zM726 711h4v1h-4zM729 711h4v1h-4zM735 711h4v1h-4zM739 711h4v1h-4zM745 711h4v1h-4zM752 711h4v1h-4zM755 711h4v1h-4zM758 711h4v1h-4zM762 711h4v1h-4zM771 711h4v1h-4zM784 711h4v1h-4zM788 711h4v1h-4zM807 711h4v1h-4zM811 711h4v1h-4zM820 711h4v1h-4zM827 711h4v1h-4zM833 711h4v1h-4zM840 711h4v1h-4zM850 711h4v1h-4zM869 711h4v1h-4zM892 711h4v1h-4zM902 711h4v1h-4zM908 711h4v1h-4zM912 711h4v1h-4zM915 711h4v1h-4zM925 711h4v1h-4zM931 711h4v1h-4zM935 711h4v1h-4zM970 711h4v1h-4zM987 711h4v1h-4zM990 711h4v1h-4zM993 711h4v1h-4zM997 711h4v1h-4zM1006 711h4v1h-4zM1019 711h4v1h-4zM1023 711h4v1h-4zM1026 711h4v1h-4zM1036 711h4v1h-4zM1052 711h4v1h-4zM1062 711h4v1h-4zM1065 711h4v1h-4zM1072 711h4v1h-4zM1075 711h4v1h-4zM1078 711h4v1h-4zM1081 711h4v1h-4zM1085 711h4v1h-4zM1095 711h4v1h-4zM1098 711h4v1h-4zM1104 711h4v1h-4zM1108 711h4v1h-4zM1111 711h4v1h-4zM1114 711h4v1h-4zM1127 711h4v1h-4z"/>
</svg>
<svg width="1248" height="757" viewBox="0 0 1248 757" style="position:absolute;left:0;top:0">
<path d="M83 711.5H133M234 711.5H267M671 711.5H719M757 711.5H811M837 711.5H884M958 711.5H983" stroke="#E818C8" stroke-width="1" fill="none"/>
<path d="M192 711H225M276 711H317M373 711H420M442 711H467M504 711H555M598 711H638M811 711H837M890 711H936M992 711H1039M1097 711H1130" stroke="#F2A81C" stroke-width="1.6" fill="none"/>
<path d="M142 710.8H192M317 710.8H373M420 710.8H442M467 710.8H504M564 710.8H598M638 710.8H665M719 710.8H757M936 710.8H958M1039 710.8H1097" stroke="#18A040" stroke-width="1.8" fill="none"/>
<path d="M37 710.5H82" stroke="#F2A81C" stroke-width="1.2" fill="none"/>
<polyline points="16,711 19,708 33,707 38,711" fill="none" stroke="#E818C8"/>
<polyline points="286,711 290,708 304,708 310,711" fill="none" stroke="#E818C8"/>
<polyline points="397,711 401,705 411,704.5 418,708 432,707.5 436,711" fill="none" stroke="#E818C8"/>
<polyline points="401,711 404,709 438,708.5 440,707.5 464,707.5 468,709.5" fill="none" stroke="#F2A81C" stroke-width="1.2"/>
<polyline points="882,711 890,707.5 897,710.5" fill="none" stroke="#E818C8"/>
<polyline points="950,711 953,702 956,698.8 966,698.8 971,709" fill="none" stroke="#E818C8"/>
<polyline points="951,710 954,707.5 971,707 973,706.3 1002,706.3 1004,707.5 1015,707.5 1018,710" fill="none" stroke="#F2A81C" stroke-width="1.2"/>
<polyline points="1134,711 1137,707 1139,695 1142,671.5" fill="none" stroke="#E818C8"/>
<polyline points="1134,711 1138,709 1142,702" fill="none" stroke="#F2A81C" stroke-width="1.2"/>
</svg>
<svg width="1248" height="757" viewBox="0 0 1248 757" style="position:absolute;left:0;top:0" shape-rendering="crispEdges">
<path d="M8 77.5H1241M8 396.5H1241M8 555.5H1241M8 714.5H1241M8 732.5H1241" stroke="#858585" fill="none"/>
<path d="M1175.5 78V733M1240.5 78V733M7.5 78V733" stroke="#858585" fill="none"/>
<path d="M89.5 715v18M148.5 715v18M216.5 715v18M285.5 715v18M353.5 715v18M419.5 715v18M487.5 715v18M559.5 715v18M624.5 715v18M686.5 715v18M758.5 715v18M827.5 715v18M892.5 715v18M957.5 715v18M1029.5 715v18M1094.5 715v18" stroke="#858585" fill="none"/>
<path d="M1176 107.5h6M1176 140.5h6M1176 172.5h6M1176 204.5h6M1176 237.5h6M1176 269.5h6M1176 301.5h6M1176 334.5h6M1176 366.5h6M1176 94.5h2M1176 101.5h2M1176 113.5h2M1176 120.5h2M1176 126.5h2M1176 133.5h2M1176 146.5h2M1176 152.5h2M1176 159.5h2M1176 165.5h2M1176 178.5h2M1176 185.5h2M1176 191.5h2M1176 198.5h2M1176 211.5h2M1176 217.5h2M1176 224.5h2M1176 230.5h2M1176 243.5h2M1176 249.5h2M1176 256.5h2M1176 262.5h2M1176 275.5h2M1176 282.5h2M1176 288.5h2M1176 295.5h2M1176 308.5h2M1176 314.5h2M1176 321.5h2M1176 327.5h2M1176 340.5h2M1176 347.5h2M1176 353.5h2M1176 360.5h2M1176 372.5h2M1176 408.5h6M1176 437.5h6M1176 466.5h6M1176 495.5h6M1176 524.5h6M1176 414.5h2M1176 420.5h2M1176 425.5h2M1176 431.5h2M1176 443.5h2M1176 449.5h2M1176 454.5h2M1176 460.5h2M1176 472.5h2M1176 478.5h2M1176 483.5h2M1176 489.5h2M1176 501.5h2M1176 507.5h2M1176 512.5h2M1176 518.5h2M1176 530.5h2M1176 536.5h2M1176 541.5h2M1176 547.5h2M1176 589.5h6M1176 613.5h6M1176 638.5h6M1176 663.5h6M1176 687.5h6M1176 574.5h2M1176 579.5h2M1176 584.5h2M1176 594.5h2M1176 599.5h2M1176 604.5h2M1176 609.5h2M1176 618.5h2M1176 623.5h2M1176 628.5h2M1176 633.5h2M1176 643.5h2M1176 648.5h2M1176 653.5h2M1176 658.5h2M1176 667.5h2M1176 672.5h2M1176 677.5h2M1176 682.5h2M1176 692.5h2M1176 697.5h2M1176 702.5h2M1176 707.5h2M1176 553.5h6M1176 712.5h6" stroke="#707070" fill="none"/>
</svg>
<span class="t" style="left:783px;top:308.14px;color:#383838;"><span class="k" style="width:12.08px">배</span><span class="k" style="width:12.08px">당</span><span class="k" style="width:12.08px">락</span><span class="r" style="letter-spacing:-0.40px">(0,00%)</span></span>
<span class="t" style="left:8px;top:184.74px;color:#383838;"><span class="k" style="width:11.29px">락</span><span class="r" style="letter-spacing:-0.76px">(0,00%)</span></span>
<span class="t" style="left:8px;top:233.64px;color:#383838;"><span class="k" style="width:10.86px">락</span><span class="r" style="letter-spacing:-0.73px">(-49,94%)</span></span>
<span class="t" style="left:666.7px;top:368.54px;color:#0808F0;"><span class="k" style="width:11.54px">최</span><span class="k" style="width:11.54px">저</span><span class="r" style="letter-spacing:-0.02px"> 837 (12/08)</span></span>
<span class="t" style="left:22px;top:399.14px;color:#0000E8;"><span class="k" style="width:11.75px">거</span><span class="k" style="width:11.75px">래</span><span class="k" style="width:11.75px">대</span><span class="k" style="width:11.75px">금</span></span>
<span class="t" style="left:22.5px;top:558.14px;color:#208C8C;"><span class="k" style="width:11.83px">거</span><span class="k" style="width:11.83px">래</span><span class="k" style="width:11.83px">량</span></span>
<span class="t" style="left:66.7px;top:558.14px;color:#E818C8;"><span class="k" style="width:11.75px">단</span><span class="k" style="width:11.75px">순</span><span class="r" style="letter-spacing:-0.11px"> 5</span></span>
<span class="t" style="left:108.4px;top:558.14px;color:#F0A000;letter-spacing:-1.17px;">20</span>
<span class="t" style="left:128.6px;top:558.14px;color:#109838;letter-spacing:-1.17px;">60</span>
<span class="t" style="left:148.8px;top:558.14px;color:#686868;letter-spacing:-1.13px;">120</span>
<span class="t" style="left:12.8px;top:571.14px;color:#000;"><span class="r" style="letter-spacing:-0.39px">144,138,069</span><span class="k" style="width:12.10px">주</span><span class="r" style="letter-spacing:-0.44px">(261,75%)</span></span>
<svg style="position:absolute;left:13px;top:97px" width="15" height="15" viewBox="0 0 15 15" shape-rendering="crispEdges"><rect x="0.5" y="0.5" width="13" height="13" fill="#fff" stroke="#000"/><path d="M2 2.500h10M2 5.500h10M2 8.500h10M2 11.500h10M2.500 2v10M5.500 2v10M8.500 2v10M11.500 2v10" stroke="#808080" fill="none"/></svg>
<span class="t" style="left:9.5px;top:716.94px;color:#404040;letter-spacing:-0.44px;">2021/12</span>
<span class="t" style="left:91px;top:716.94px;color:#404040;letter-spacing:-1.24px;">02</span>
<span class="t" style="left:150px;top:716.94px;color:#404040;letter-spacing:-1.24px;">03</span>
<span class="t" style="left:218px;top:716.94px;color:#404040;letter-spacing:-1.24px;">04</span>
<span class="t" style="left:287px;top:716.94px;color:#404040;letter-spacing:-1.24px;">05</span>
<span class="t" style="left:355px;top:716.94px;color:#404040;letter-spacing:-1.24px;">06</span>
<span class="t" style="left:421px;top:716.94px;color:#404040;letter-spacing:-1.24px;">07</span>
<span class="t" style="left:489px;top:716.94px;color:#404040;letter-spacing:-1.24px;">08</span>
<span class="t" style="left:561px;top:716.94px;color:#404040;letter-spacing:-1.24px;">09</span>
<span class="t" style="left:626px;top:716.94px;color:#404040;letter-spacing:-1.24px;">10</span>
<span class="t" style="left:688px;top:716.94px;color:#404040;letter-spacing:-0.65px;">11</span>
<span class="t" style="left:760px;top:716.94px;color:#404040;letter-spacing:-1.24px;">12</span>
<span class="t" style="left:829px;top:716.94px;color:#404040;letter-spacing:-0.44px;">2023/01</span>
<span class="t" style="left:894px;top:716.94px;color:#404040;letter-spacing:-1.24px;">02</span>
<span class="t" style="left:959px;top:716.94px;color:#404040;letter-spacing:-1.24px;">03</span>
<span class="t" style="left:1031px;top:716.94px;color:#404040;letter-spacing:-1.24px;">04</span>
<span class="t" style="left:1096px;top:716.94px;color:#404040;letter-spacing:-1.24px;">05</span>
<span class="t" style="left:1184.5px;top:716.94px;color:#404040;letter-spacing:-0.23px;">05/23</span>
<span class="t" style="left:1183.5px;top:100.54px;color:#404040;letter-spacing:-0.45px;">5,000</span>
<span class="t" style="left:1183.5px;top:133.54px;color:#404040;letter-spacing:-0.45px;">4,500</span>
<span class="t" style="left:1183.5px;top:165.54px;color:#404040;letter-spacing:-0.45px;">4,000</span>
<span class="t" style="left:1183.5px;top:197.54px;color:#404040;letter-spacing:-0.45px;">3,500</span>
<span class="t" style="left:1183.5px;top:230.54px;color:#404040;letter-spacing:-0.45px;">3,000</span>
<span class="t" style="left:1183.5px;top:262.54px;color:#404040;letter-spacing:-0.45px;">2,500</span>
<span class="t" style="left:1183.5px;top:294.54px;color:#404040;letter-spacing:-0.45px;">2,000</span>
<span class="t" style="left:1183.5px;top:327.54px;color:#404040;letter-spacing:-0.45px;">1,500</span>
<span class="t" style="left:1183.5px;top:359.54px;color:#404040;letter-spacing:-0.45px;">1,000</span>
<span class="t" style="left:1184px;top:401.54px;color:#404040;letter-spacing:-0.60px;">250,000</span>
<span class="t" style="left:1184px;top:430.54px;color:#404040;letter-spacing:-0.60px;">200,000</span>
<span class="t" style="left:1184px;top:459.54px;color:#404040;letter-spacing:-0.60px;">150,000</span>
<span class="t" style="left:1184px;top:488.54px;color:#404040;letter-spacing:-0.60px;">100,000</span>
<span class="t" style="left:1184px;top:517.54px;color:#404040;letter-spacing:-0.58px;">50,000</span>
<span class="t" style="left:1184px;top:582.54px;color:#404040;letter-spacing:-0.59px;">125,000K</span>
<span class="t" style="left:1184px;top:606.54px;color:#404040;letter-spacing:-0.59px;">100,000K</span>
<span class="t" style="left:1184px;top:631.54px;color:#404040;letter-spacing:-0.57px;">75,000K</span>
<span class="t" style="left:1184px;top:656.54px;color:#404040;letter-spacing:-0.57px;">50,000K</span>
<span class="t" style="left:1184px;top:680.54px;color:#404040;letter-spacing:-0.57px;">25,000K</span>
<div class="" style="left:1176px;top:79px;width:64px;height:25px;background:#D5E0EE"></div>
<span class="t" style="left:1176.5px;top:79.84px;color:#E8140C;letter-spacing:-0.22px;">LC:129,15</span>
<span class="t" style="left:1176.5px;top:91.14px;color:#1050D0;letter-spacing:-0.08px;">HC:-63,12</span>
<div class="" style="left:1180px;top:300px;width:58px;height:13px;background:#E41A0A"></div>
<span class="t" style="left:1184.5px;top:300.44px;color:#fff;letter-spacing:-0.67px;">1,918</span>
<div class="" style="left:1180px;top:313px;width:59px;height:12px;background:#D5E0EE"></div>
<span class="t" style="left:1184px;top:313.14px;color:#E8140C;letter-spacing:-0.86px;">29,95%</span>
<div class="" style="left:1180px;top:404px;width:58px;height:13px;background:#FF0000"></div>
<span class="t" style="left:1184px;top:404.44px;color:#fff;letter-spacing:-0.68px;">245,519</span>
<div class="" style="left:1180px;top:417px;width:59px;height:11px;background:#D5E0EE"></div>
<span class="t" style="left:1184px;top:416.74px;color:#F01010;letter-spacing:-0.83px;">314,87%</span>
<div class="" style="left:1180px;top:563px;width:58px;height:13px;background:#E41A0A"></div>
<span class="t" style="left:1184px;top:563.44px;color:#fff;letter-spacing:-0.72px;">144,138K</span>
<div class="" style="left:1180px;top:576px;width:59px;height:10.5px;background:#D5E0EE"></div>
<span class="t" style="left:1184px;top:575.64px;color:#E8140C;letter-spacing:-0.83px;">261,75%</span>
<svg style="position:absolute;left:1230px;top:399px" width="8" height="8" viewBox="0 0 8 8" shape-rendering="crispEdges"><rect width="8" height="8" fill="#3a3a3a"/><path d="M2 2.5h1M5 2.5h1M3 3.5h2M3 4.5h2M2 5.5h1M5 5.5h1" stroke="#fff"/></svg>
<svg style="position:absolute;left:1230px;top:558px" width="8" height="8" viewBox="0 0 8 8" shape-rendering="crispEdges"><rect width="8" height="8" fill="#3a3a3a"/><path d="M2 2.5h1M5 2.5h1M3 3.5h2M3 4.5h2M2 5.5h1M5 5.5h1" stroke="#fff"/></svg>
<div class="" style="left:8px;top:733px;width:1233px;height:17px;background:#F0F0F0"></div>
<div class="" style="left:24px;top:733px;width:357px;height:17px;background:#F7F7F7"></div>
<div class="" style="left:381px;top:733px;width:491px;height:17px;background:#E9E9E9;border:1px solid;border-color:#fff #a0a0a0 #a0a0a0 #fff"></div>
<div class="btn" style="left:8px;top:733px;width:16px;height:17px;"></div>
<div class="btn" style="left:872px;top:733px;width:16px;height:17px;"></div>
<div class="btn" style="left:889px;top:733px;width:15px;height:17px;"></div>
<div class="btn" style="left:906px;top:733px;width:15px;height:17px;"></div>
<div class="btn" style="left:923px;top:733px;width:15px;height:17px;"></div>
<div class="" style="left:1073px;top:733px;width:15px;height:17px;background:#fafafa;border-left:1px solid #999;border-top:1px solid #999"></div>
<svg style="position:absolute;left:1066px;top:6px" width="18" height="16" viewBox="0 0 18 16"><rect x="2.5" y="5.5" width="10" height="8" fill="#fff" stroke="#1c58c8"/><rect x="2.5" y="5.5" width="10" height="2" fill="#2868d8" stroke="#1c58c8"/><rect x="7.5" y="2.5" width="8" height="6" fill="#fff" stroke="#1c50c0"/><rect x="8.5" y="3.5" width="6" height="4" fill="#fff" stroke="#f05030" stroke-width="1.4"/></svg>
<svg style="position:absolute;left:1086px;top:6px" width="18" height="16" viewBox="0 0 18 16"><rect x="3.5" y="2.5" width="11" height="2" rx="1" fill="#fff" stroke="#2860c8"/><path d="M9 5.5l5 5h-2.7v3h-4.6v-3h-2.7z" fill="#fff" stroke="#2860c8" stroke-width="1.2" stroke-linejoin="round"/></svg>
<svg style="position:absolute;left:1106px;top:6px" width="18" height="16" viewBox="0 0 18 16"><rect x="5.5" y="4.5" width="10" height="9" fill="#e8f0fc" stroke="#2458c0" stroke-width="1.2"/><rect x="2.5" y="2.5" width="10" height="9" fill="#fff" stroke="#2458c0" stroke-width="1.2"/><rect x="3" y="3" width="9" height="2" fill="#5c90e8"/><rect x="4" y="3" width="2" height="2" fill="#f04020"/><rect x="6" y="3" width="2" height="2" fill="#f8a020"/></svg>
<svg style="position:absolute;left:1126px;top:6px" width="18" height="16" viewBox="0 0 18 16"><path d="M2 8.5h6" stroke="#f02010" stroke-width="1.4"/><path d="M7.5 3.5h2l1 2h3l1-2h1v10h-1l-1-2h-3l-1 2h-2z" fill="#2a62c8" stroke="#103c98" stroke-width="0.8"/><rect x="10.5" y="6" width="3" height="5" fill="#cfe0f8"/></svg>
<span style="left:1146px;top:6px;width:18px;height:16px;font:italic 18px 'Liberation Serif',serif;line-height:15px;color:#E8201C;text-align:center">A</span>
<span style="left:1166px;top:6px;width:18px;height:16px;font:bold 15px 'Liberation Sans',sans-serif;line-height:16px;color:#E81818;text-align:center">?</span>
<svg style="position:absolute;left:1195px;top:6px" width="15" height="15" viewBox="0 0 15 15" shape-rendering="crispEdges"><rect x="4" y="10" width="6" height="2" fill="#1a2c4c"/></svg>
<svg style="position:absolute;left:1212px;top:6px" width="15" height="15" viewBox="0 0 15 15" shape-rendering="crispEdges"><rect x="3.5" y="3.5" width="8" height="8" fill="none" stroke="#1a2c4c"/><rect x="3" y="3" width="9" height="2" fill="#1a2c4c"/></svg>
<svg style="position:absolute;left:1229px;top:6px" width="15" height="15" viewBox="0 0 15 15"><path d="M4 4l7 7M11 4l-7 7" stroke="#1a2c4c" stroke-width="1.6"/></svg>
<svg style="position:absolute;left:8px;top:32px" width="18" height="18" viewBox="0 0 18 18"><path d="M7 3h9v9l-3 3h-6z" fill="#EBD4A8" stroke="#c8a870" stroke-width="0.6"/><path d="M13 15v-3h3z" fill="#b8d0f0" stroke="#6080b0" stroke-width="0.5"/><rect x="3.5" y="8" width="4" height="7.5" fill="#2a5cb0"/><path d="M3.5 15.5h9" stroke="#1c4088" stroke-width="1.6"/><circle cx="5.5" cy="5.5" r="3.2" fill="#0c2050"/><circle cx="4.8" cy="5.3" r="1" fill="#fff"/></svg>
<svg style="position:absolute;left:49px;top:40.5px" width="6" height="3.5" viewBox="0 0 6 3.5"><path d="M0 0h6l-3 3.500z" fill="#484848"/></svg>
<svg style="position:absolute;left:140.5px;top:40.5px" width="6" height="3.5" viewBox="0 0 6 3.5"><path d="M0 0h6l-3 3.500z" fill="#484848"/></svg>
<svg style="position:absolute;left:602px;top:40.5px" width="6" height="3.5" viewBox="0 0 6 3.5"><path d="M0 0h6l-3 3.500z" fill="#909090"/></svg>
<svg style="position:absolute;left:189px;top:41px" width="5" height="3" viewBox="0 0 5 3"><path d="M0 0h5l-2.500 3z" fill="#484848"/></svg>
<svg style="position:absolute;left:151px;top:33px" width="17" height="16" viewBox="0 0 17 16"><circle cx="7" cy="6.5" r="4.2" fill="#d4e8fc" stroke="#2868c8" stroke-width="1.5"/><circle cx="6" cy="5.5" r="1.5" fill="#fff"/><path d="M10 10l4 4" stroke="#b08030" stroke-width="2.4" stroke-linecap="round"/><path d="M10 9.6l1.2 1.2" stroke="#2868c8" stroke-width="1.6"/></svg>
<svg style="position:absolute;left:172px;top:33px" width="18" height="17" viewBox="0 0 18 17"><path d="M2 6.5h3.5l4.5-4v13l-4.5-4h-3.5z" fill="#F4AC20" stroke="#a86808" stroke-width="0.9" stroke-linejoin="round"/><rect x="11" y="6" width="2.4" height="2.4" fill="#b02020"/><rect x="13.6" y="6" width="2.4" height="2.4" fill="#2080e0"/><rect x="11" y="8.8" width="2.4" height="2.4" fill="#f0b020"/><rect x="11" y="11.4" width="2.4" height="2" fill="#404040"/></svg>
<svg style="position:absolute;left:272px;top:33px" width="9" height="16" viewBox="0 0 9 16"><path d="M0 0h9v8z" fill="#10A858"/><path d="M9 8v8h-8z" fill="#b4b4b4"/></svg>
<svg style="position:absolute;left:680px;top:32px" width="18" height="18" viewBox="0 0 18 18"><rect x="7" y="4" width="4" height="6" fill="#2858c8"/><rect x="8.5" y="2.5" width="1" height="9" fill="#2858c8"/><rect x="11.5" y="5" width="4.5" height="5" fill="#e84838"/><rect x="13.2" y="3.5" width="1" height="8" fill="#e84838"/><path d="M2.5 12.5l4.5-3.5v2.2h4v2.6h-4v2.2z" fill="#000"/><rect x="7" y="11.2" width="4" height="2.6" fill="#3870d8"/></svg>
<svg style="position:absolute;left:699px;top:32px" width="18" height="18" viewBox="0 0 18 18"><path d="M3.5 3v10.5h12" fill="none" stroke="#a0a0a0" stroke-width="0.8" stroke-dasharray="1 1"/><path d="M4 9l3-3 3 3 3-4 2 3" fill="none" stroke="#58a0e8" stroke-width="1"/><path d="M6 12l4-2 2.5 1.5 3.5-4" fill="none" stroke="#e82018" stroke-width="1.6"/><circle cx="5.5" cy="13" r="3" fill="#0c2458"/><path d="M3.8 13h3.4M5.5 11.3v3.4" stroke="#fff" stroke-width="1"/></svg>
<svg style="position:absolute;left:718px;top:32px" width="18" height="18" viewBox="0 0 18 18"><rect x="3" y="3" width="13" height="13" fill="#000"/><path d="M3.8 3.8h11.4v11.4h-11.4z" fill="none" stroke="#8c8c20" stroke-width="0.9"/><rect x="5.5" y="3.5" width="8" height="5" fill="#7c7c7c" stroke="#a0a030" stroke-width="0.6"/><rect x="6" y="10.5" width="7" height="5" fill="#8c8c20"/><rect x="10.5" y="11.5" width="2" height="3.5" fill="#c0c0c0"/></svg>
<svg style="position:absolute;left:737px;top:32px" width="18" height="18" viewBox="0 0 18 18"><polygon points="16.16,8.21 16.16,9.79 14.09,10.48 13.64,11.55 14.62,13.50 13.50,14.62 11.55,13.64 10.48,14.09 9.79,16.16 8.21,16.16 7.52,14.09 6.45,13.64 4.50,14.62 3.38,13.50 4.36,11.55 3.91,10.48 1.84,9.79 1.84,8.21 3.91,7.52 4.36,6.45 3.38,4.50 4.50,3.38 6.45,4.36 7.52,3.91 8.21,1.84 9.79,1.84 10.48,3.91 11.55,4.36 13.50,3.38 14.62,4.50 13.64,6.45 14.09,7.52" fill="#F4A818" stroke="#704808" stroke-width="0.8"/><circle cx="9" cy="9" r="2.6" fill="#fff" stroke="#704808" stroke-width="0.9"/></svg>
<svg style="position:absolute;left:822px;top:34px" width="17" height="15" viewBox="0 0 17 15" shape-rendering="crispEdges"><rect x="3.5" y="2.5" width="10" height="9" fill="#fff" stroke="#101010" stroke-width="1.2"/><path d="M3.5 4.5h10" stroke="#101010"/><rect x="5.5" y="6" width="2.5" height="1.6" fill="#f09020"/><rect x="9" y="6" width="2.5" height="1.6" fill="#f09020"/><rect x="5.5" y="8.5" width="2.5" height="1.6" fill="#f09020"/><rect x="9" y="8.5" width="2.5" height="1.6" fill="#f09020"/></svg>
<svg style="position:absolute;left:8px;top:733px" width="16" height="17" viewBox="0 0 16 17"><path d="M10.5 4.5v8l-5-4z" fill="#000"/></svg>
<svg style="position:absolute;left:872px;top:733px" width="16" height="17" viewBox="0 0 16 17"><path d="M6 4.5v8l5-4z" fill="#000"/></svg>
<svg style="position:absolute;left:889px;top:733px" width="15" height="17" viewBox="0 0 15 17"><path d="M7.5 4.5v7l-4.5-3.5zM12 4.5v7l-4.5-3.5z" fill="#000"/></svg>
<svg style="position:absolute;left:906px;top:733px" width="15" height="17" viewBox="0 0 15 17"><rect x="4.5" y="5" width="6.5" height="6.5" fill="#000"/></svg>
<svg style="position:absolute;left:923px;top:733px" width="15" height="17" viewBox="0 0 15 17"><path d="M3.5 4.5v7l4.5-3.5zM8 4.5v7l4.5-3.5z" fill="#000"/></svg>
<svg style="position:absolute;left:945px;top:733px" width="70" height="17" viewBox="0 0 70 17"><path d="M1 4.8h68" stroke="#8c8c8c" stroke-width="1.6"/><path d="M1 6h68" stroke="#fff" stroke-width="0.8"/><path d="M40 2h3v8l-1.5 2.5-1.5-2.5z" fill="#d8d8d8" stroke="#808080" stroke-width="0.8"/><path d="M2.0 14.5v2.5M8.5 14.5v2.5M15.1 14.5v2.5M21.6 14.5v2.5M28.1 14.5v2.5M34.6 14.5v2.5M41.2 14.5v2.5M47.7 14.5v2.5M54.2 14.5v2.5M60.8 14.5v2.5M67.3 14.5v2.5" stroke="#000" stroke-width="1"/></svg>
<svg style="position:absolute;left:1022px;top:734px" width="14" height="15" viewBox="0 0 14 15" shape-rendering="crispEdges"><rect x="0.5" y="1.5" width="9" height="9" fill="none" stroke="#8a8a8a"/><rect x="6.5" y="7.5" width="6" height="6" fill="#f0f0f0" stroke="#606060"/><path d="M6.5 10.5h6M9.5 7.5v6" stroke="#606060"/></svg>
<svg style="position:absolute;left:1039px;top:734px" width="14" height="15" viewBox="0 0 14 15" shape-rendering="crispEdges"><rect x="0.5" y="1.5" width="9" height="8" fill="none" stroke="#8a8a8a"/><rect x="4.5" y="5.5" width="8" height="8" fill="#f0f0f0" stroke="#707070"/><rect x="5" y="6" width="7" height="3" fill="#c8c8c8"/></svg>
<svg style="position:absolute;left:1055px;top:734px" width="15" height="15" viewBox="0 0 15 15"><path d="M1 2.5h12M1 12.5h12" stroke="#707070" stroke-dasharray="1 1"/><path d="M11 1l2.5 1.5-2.5 1.5zM11 11l2.5 1.5-2.5 1.5z" fill="#606060"/><path d="M1 6l3 3 3-2 2 2 4-4" fill="none" stroke="#a0a0a0"/></svg>
<svg style="position:absolute;left:1074px;top:734px" width="14" height="16" viewBox="0 0 14 16"><path d="M1 4.5h12M4.500 1v13" stroke="#505050" stroke-width="1.1"/><path d="M6.500 6.500l5 5M6.500 6.500h3.500M6.500 6.500v3.500" stroke="#707070" stroke-width="1.1" fill="none"/></svg>
<svg style="position:absolute;left:1090px;top:734px" width="14" height="16" viewBox="0 0 14 16"><path d="M0 4.500h13" stroke="#707070" stroke-width="1.1"/><path d="M1 11l3-2 2-5 2 6 2-5 3 1" fill="none" stroke="#909090"/></svg>
<svg style="position:absolute;left:1107px;top:734px" width="14" height="16" viewBox="0 0 14 16"><path d="M4.500 0v14" stroke="#806878" stroke-width="1.1"/><path d="M1 12l3-2 2-6 2 7 2-5 3 2" fill="none" stroke="#909090"/></svg>
<svg style="position:absolute;left:1124px;top:734px" width="14" height="16" viewBox="0 0 14 16"><path d="M1 12l9-11" stroke="#806878" stroke-width="1.3"/><path d="M1 12l3-1 2-5 2 6 2-5 3 2" fill="none" stroke="#909090"/></svg>
<svg style="position:absolute;left:1141px;top:734px" width="14" height="16" viewBox="0 0 14 16"><path d="M1 8l5-5h6l-5 5zM1 8v3h6v-3M7 11l5-5v-3" fill="#e8e8e8" stroke="#909090"/><path d="M8 13.500v-3M10 13.500v-4M12 13.500v-5" stroke="#505050"/></svg>
<svg style="position:absolute;left:1158px;top:734px" width="14" height="16" viewBox="0 0 14 16"><rect x="3.500" y="1.500" width="9" height="7" fill="#e0e0e0" stroke="#808080"/><path d="M5 6l2-2 2 1 2-2" fill="none" stroke="#a0a0a0"/><rect x="0.500" y="6.500" width="9" height="7" fill="#f4f4f4" stroke="#505050"/><path d="M2 12l2-2 2 1 2-3" fill="none" stroke="#606060"/></svg>
<svg style="position:absolute;left:1175px;top:733px" width="15" height="17" viewBox="0 0 15 17"><circle cx="6" cy="6" r="4.300" fill="none" stroke="#505050" stroke-width="1.100"/><path d="M9.200 9.500l3.500 4" stroke="#505050" stroke-width="2"/></svg>
<svg style="position:absolute;left:1193px;top:733px" width="12" height="17" viewBox="0 0 12 17"><rect x="1" y="7.700" width="9.500" height="2" fill="#505050"/></svg>
<svg style="position:absolute;left:1210px;top:733px" width="12" height="17" viewBox="0 0 12 17"><rect x="1" y="7.700" width="10" height="2" fill="#505050"/><rect x="5" y="3.700" width="2" height="10" fill="#505050"/></svg>
<span style="left:1226.500px;top:734px;width:12px;height:14px;font:bold 13px 'Liberation Sans',sans-serif;line-height:15px;color:#505050;text-align:center">A</span>
</body></html>
